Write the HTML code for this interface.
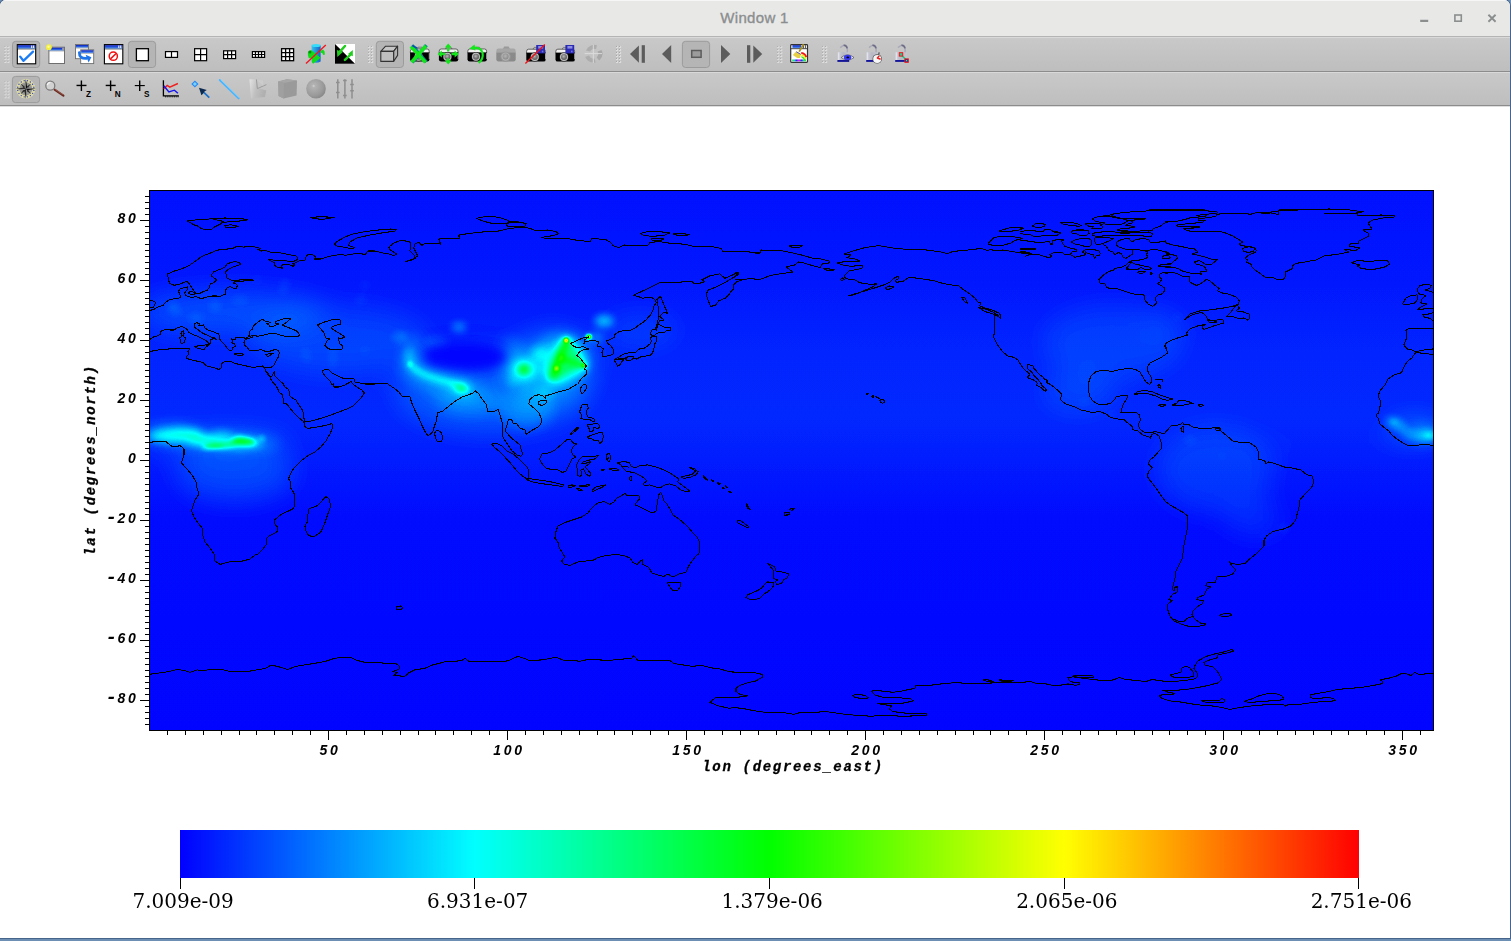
<!DOCTYPE html>
<html lang="en">
<head>
<meta charset="utf-8">
<title>Window 1</title>
<style>
html,body{margin:0;padding:0;background:#6d8fb3;}
body{width:1511px;height:941px;overflow:hidden;position:relative;font-family:"Liberation Sans",sans-serif;}
#win{position:absolute;left:0;top:0;width:1510px;height:938px;overflow:hidden;background:#fff;border-radius:6px 6px 0 0;}
#winshadow{position:absolute;left:-1px;top:-1px;width:1511.6px;height:939.8px;background:#47658a;border-radius:7px 7px 0 0;}
#titlebar{position:absolute;left:0;top:0;width:1510px;height:36px;background:#e8e8e7;border-top:1px solid #f6f6f6;box-sizing:border-box;}
#titlebar .t{position:absolute;left:0;width:1509px;top:8px;text-align:center;font-size:15px;line-height:18px;color:#8b8e8f;letter-spacing:0.3px;-webkit-text-stroke:0.35px #8b8e8f;opacity:0.999;}
#tb1,#tb2{position:absolute;left:0;width:1511px;box-sizing:border-box;background:linear-gradient(#c9c9c9,#bebebe);}
#tb1{top:36px;height:36px;border-top:1px solid #b4b4b4;border-bottom:1px solid #8c8c8c;box-shadow:inset 0 1px 0 #d9d9d9;}
#tb2{top:72px;height:34px;border-bottom:1px solid #8c8c8c;box-shadow:inset 0 1px 0 #d9d9d9, 0 1px 0 #dedede;}
svg.plot{position:absolute;left:0;top:0;opacity:0.999;}
.ax{font-family:"Liberation Mono",monospace;font-weight:bold;font-style:italic;font-size:14px;letter-spacing:1.68px;fill:#000;stroke:#000;stroke-width:0.3px;}
.axn{font-family:"Liberation Sans",sans-serif;font-weight:bold;font-style:italic;font-size:14px;letter-spacing:2.7px;fill:#000;}
.mn{font-family:"Liberation Mono",monospace;font-size:19px;letter-spacing:0.5px;}
.cb{font-family:"DejaVu Serif","Liberation Serif",serif;font-size:20px;fill:#000;}
#wbtn{position:absolute;left:1400px;top:0;}
#tbsvg{position:absolute;left:0;top:0;opacity:0.999;}

.tl{opacity:0.99;font-family:"Liberation Sans",sans-serif;font-weight:bold;font-size:8.2px;fill:#000;}

</style>
</head>
<body>
<div id="winshadow"></div>
<div id="win">
<div id="titlebar"><div class="t">Window 1</div>
<svg id="wbtn" width="110" height="36" viewBox="1400 0 110 36">
<path d="M1420.2 19.9H1428.2" stroke="#8b8e8f" stroke-width="2.1"/>
<rect x="1454.9" y="14.0" width="6.4" height="6.2" fill="none" stroke="#8b8e8f" stroke-width="1.6"/>
<path d="M1488.4 13.8 L1495.6 20.8 M1495.6 13.8 L1488.4 20.8" stroke="#8b8e8f" stroke-width="1.9"/>
</svg></div>

<div id="tb1"></div>
<div id="tb2"></div>
<svg id="tbsvg" width="1511" height="108" viewBox="0 0 1511 108">
<defs>
<linearGradient id="wt" x1="0" y1="0" x2="0" y2="1"><stop offset="0" stop-color="#0a18b4"/><stop offset="0.55" stop-color="#2a5ee0"/><stop offset="1" stop-color="#62a0f4"/></linearGradient>
<linearGradient id="cyl" x1="0" y1="0" x2="1" y2="0"><stop offset="0" stop-color="#2fc4ee"/><stop offset="1" stop-color="#1460c8"/></linearGradient>
<radialGradient id="lens" cx="0.45" cy="0.4" r="0.6"><stop offset="0" stop-color="#b8b8b8"/><stop offset="0.55" stop-color="#7c7c7c"/><stop offset="1" stop-color="#5a5a5a"/></radialGradient>
<radialGradient id="lensd" cx="0.45" cy="0.4" r="0.6"><stop offset="0" stop-color="#b4b4b4"/><stop offset="0.6" stop-color="#9a9a9a"/><stop offset="1" stop-color="#8a8a8a"/></radialGradient>
<radialGradient id="sph" cx="0.38" cy="0.36" r="0.7"><stop offset="0" stop-color="#d4d4d4"/><stop offset="0.12" stop-color="#b2b2b2"/><stop offset="0.7" stop-color="#9a9a9a"/><stop offset="1" stop-color="#868686"/></radialGradient>
<linearGradient id="pl" x1="0" y1="0" x2="1" y2="0.3"><stop offset="0" stop-color="#e4e4e4"/><stop offset="0.5" stop-color="#c0c0c0"/><stop offset="1" stop-color="#b0b0b0"/></linearGradient>
<linearGradient id="lk" x1="0" y1="0" x2="1" y2="0"><stop offset="0" stop-color="#d4d4e2"/><stop offset="0.5" stop-color="#b4b4c6"/><stop offset="1" stop-color="#c8c8d6"/></linearGradient>
<linearGradient id="rb" x1="0" y1="1" x2="1" y2="0"><stop offset="0" stop-color="#20d020"/><stop offset="0.25" stop-color="#20d0e0"/><stop offset="0.45" stop-color="#2030f0"/><stop offset="0.62" stop-color="#e020e0"/><stop offset="0.8" stop-color="#f0e020"/><stop offset="1" stop-color="#f01010"/></linearGradient>
<linearGradient id="rb2" gradientUnits="userSpaceOnUse" x1="792" y1="0" x2="806" y2="0"><stop offset="0" stop-color="#30e020"/><stop offset="0.15" stop-color="#20d8d8"/><stop offset="0.32" stop-color="#2030f0"/><stop offset="0.5" stop-color="#f020f0"/><stop offset="0.68" stop-color="#2030f0"/><stop offset="0.85" stop-color="#20d8a0"/><stop offset="1" stop-color="#40e020"/></linearGradient>
<g id="grip">
<rect x="0" y="0" width="2.1" height="2.1" fill="#dedede"/><rect x="0" y="0" width="1.05" height="1.05" fill="#a4a4a4"/>
<rect x="3" y="0" width="2.1" height="2.1" fill="#dedede"/><rect x="3" y="0" width="1.05" height="1.05" fill="#a4a4a4"/>
<rect x="0" y="3" width="2.1" height="2.1" fill="#dedede"/><rect x="0" y="3" width="1.05" height="1.05" fill="#a4a4a4"/>
<rect x="3" y="3" width="2.1" height="2.1" fill="#dedede"/><rect x="3" y="3" width="1.05" height="1.05" fill="#a4a4a4"/>
<rect x="0" y="6" width="2.1" height="2.1" fill="#dedede"/><rect x="0" y="6" width="1.05" height="1.05" fill="#a4a4a4"/>
<rect x="3" y="6" width="2.1" height="2.1" fill="#dedede"/><rect x="3" y="6" width="1.05" height="1.05" fill="#a4a4a4"/>
<rect x="0" y="9" width="2.1" height="2.1" fill="#dedede"/><rect x="0" y="9" width="1.05" height="1.05" fill="#a4a4a4"/>
<rect x="3" y="9" width="2.1" height="2.1" fill="#dedede"/><rect x="3" y="9" width="1.05" height="1.05" fill="#a4a4a4"/>
<rect x="0" y="12" width="2.1" height="2.1" fill="#dedede"/><rect x="0" y="12" width="1.05" height="1.05" fill="#a4a4a4"/>
<rect x="3" y="12" width="2.1" height="2.1" fill="#dedede"/><rect x="3" y="12" width="1.05" height="1.05" fill="#a4a4a4"/>
<rect x="0" y="15" width="2.1" height="2.1" fill="#dedede"/><rect x="0" y="15" width="1.05" height="1.05" fill="#a4a4a4"/>
<rect x="3" y="15" width="2.1" height="2.1" fill="#dedede"/><rect x="3" y="15" width="1.05" height="1.05" fill="#a4a4a4"/>
</g>
<g id="cam">
<path d="M6.8 2.6 L8.2 0.6 H12.2 L13.6 2.6Z" fill="#d8d8d8" stroke="#555" stroke-width="0.7"/>
<path d="M0.6 4.6 Q0.6 2.4 2.6 2.4 H17.4 Q19.4 2.4 19.4 4.6 V6.4 H0.6Z" fill="#f2f2f2" stroke="#444" stroke-width="0.8"/>
<path d="M0.3 6 H19.7 V12.6 Q19.7 14.8 17.4 14.8 H2.6 Q0.3 14.8 0.3 12.6Z" fill="#000"/>
<circle cx="8.8" cy="10.2" r="4.6" fill="#2a2a2a"/>
<circle cx="8.8" cy="10.2" r="4.0" fill="#c4c4c4"/>
<circle cx="8.8" cy="10.2" r="3.0" fill="url(#lens)"/>
<rect x="19" y="6.5" width="0.9" height="6" fill="#b0b0b0"/>
</g>
<g id="camd">
<path d="M6.8 2.6 L8.2 0.2 H12.6 L14 2.6Z" fill="#9a9a9a"/>
<path d="M0.3 4.6 Q0.3 2.2 2.6 2.2 H17.4 Q19.7 2.2 19.7 4.6 V6.4 H0.3Z" fill="#a6a6a6"/>
<path d="M0.3 6 H19.7 V12.8 Q19.7 15 17.4 15 H2.6 Q0.3 15 0.3 12.8Z" fill="#8a8a8a"/>
<circle cx="9.6" cy="10.2" r="5.2" fill="#969696"/>
<circle cx="9.6" cy="10.2" r="4.2" fill="#b0b0b0"/>
<circle cx="9.6" cy="10.2" r="3.0" fill="url(#lensd)"/>
</g>
<g id="floppy">
<rect x="0" y="0" width="8.8" height="8.4" fill="#2a2ab4"/>
<rect x="2" y="1" width="5" height="2.6" fill="#8c8ce0"/>
<rect x="5.6" y="5.6" width="1.6" height="1.8" fill="#7070d8"/>
</g>
<g id="lock">
<path d="M2.8 3.6 Q5.4 1.4 7.2 1 Q9.6 1.6 9.9 4.6 V8.8" fill="none" stroke="#a9a9ba" stroke-width="1.5"/>
<path d="M6.2 1.2 Q9.4 1.2 9.8 4.4" fill="none" stroke="#6c6c84" stroke-width="1.5"/>
<rect x="0.2" y="8.2" width="11.4" height="8" fill="url(#lk)" opacity="0.75"/>
<rect x="0.6" y="8.4" width="1.4" height="7.6" fill="#e4e4f0" opacity="0.9"/>
<rect x="0" y="16" width="11.8" height="1.9" fill="#14149a"/>
</g>
</defs>
<use href="#grip" x="4.4" y="45.9"/>
<rect x="12.5" y="41.3" width="27.2" height="26.2" rx="3.2" fill="#b5b5b5" stroke="#9b9b9b" stroke-width="1"/>
<rect x="17.3" y="44.6" width="18.4" height="19.2" fill="#fff" stroke="#000" stroke-width="1.1"/>
<rect x="17.85" y="45.15" width="17.299999999999997" height="3.6" fill="url(#wt)"/>
<rect x="31.1" y="45.5" width="1.2" height="2.6" fill="#e8e8f4"/><rect x="33.0" y="45.5" width="1.2" height="2.6" fill="#e8e8f4"/>
<path d="M17.3 49.05H35.7" stroke="#000" stroke-width="0.7" opacity="0.7"/>
<path d="M20.2 56.6 L23.4 60.8 L33 51.6" fill="none" stroke="#1c7cf4" stroke-width="2.3" stroke-linecap="round" stroke-linejoin="round"/>
<rect x="48.9" y="47.2" width="15.6" height="16.3" fill="#fff" stroke="#6e6e6e" stroke-width="1.0"/>
<rect x="49.4" y="47.7" width="14.6" height="3.0" fill="url(#wt)"/>
<path d="M48.9 51.0H64.5" stroke="#6e6e6e" stroke-width="0.7" opacity="0.7"/>
<rect x="62.1" y="47.8" width="2" height="2.6" fill="#9a9aa8"/>
<circle cx="48.9" cy="47.2" r="2.9" fill="#f4f03a"/><circle cx="48.5" cy="46.8" r="1.2" fill="#fbfba0"/>
<rect x="75.5" y="44.5" width="13" height="14.2" fill="#fff" stroke="#6e6e6e" stroke-width="0.9"/>
<rect x="75.95" y="44.95" width="12.1" height="2.8" fill="url(#wt)"/>
<path d="M75.5 48.05H88.5" stroke="#6e6e6e" stroke-width="0.7" opacity="0.7"/>
<rect x="80.7" y="49.8" width="13" height="13.8" fill="#fff" stroke="#6e6e6e" stroke-width="0.9"/>
<rect x="81.15" y="50.25" width="12.1" height="2.8" fill="url(#wt)"/>
<path d="M80.7 53.349999999999994H93.7" stroke="#6e6e6e" stroke-width="0.7" opacity="0.7"/>
<path d="M79.3 52.5 Q79 58.8 86.6 58.4" fill="none" stroke="#1e74e8" stroke-width="2.6" stroke-linecap="round"/>
<path d="M85.6 54.8 L91.4 57.2 L88.6 62.4 Z" fill="#1e74e8"/>
<rect x="104.4" y="44.6" width="18.4" height="19.2" fill="#fff" stroke="#000" stroke-width="1.1"/>
<rect x="104.95" y="45.15" width="17.299999999999997" height="3.6" fill="url(#wt)"/>
<rect x="118.20000000000002" y="45.5" width="1.2" height="2.6" fill="#e8e8f4"/><rect x="120.10000000000001" y="45.5" width="1.2" height="2.6" fill="#e8e8f4"/>
<path d="M104.4 49.05H122.80000000000001" stroke="#000" stroke-width="0.7" opacity="0.7"/>
<circle cx="113.3" cy="56.2" r="4.1" fill="none" stroke="#f01010" stroke-width="1.5"/><path d="M110.5 58.9 L116.1 53.5" stroke="#f01010" stroke-width="1.5"/>
<rect x="128.4" y="41.3" width="27.2" height="26.2" rx="3.2" fill="#b5b5b5" stroke="#9b9b9b" stroke-width="1"/>
<rect x="136.4" y="48.7" width="12" height="12" fill="#fff" stroke="#000" stroke-width="1.3"/>
<rect x="165.5" y="51.6" width="12" height="5.8" fill="#fff" stroke="#000" stroke-width="1.2"/>
<path d="M171.50 51.6V57.4" stroke="#000" stroke-width="1.2" fill="none"/>
<rect x="194.6" y="48.7" width="12" height="12" fill="#fff" stroke="#000" stroke-width="1.2"/>
<path d="M200.60 48.7V60.7M194.6 54.70H206.6" stroke="#000" stroke-width="1.2" fill="none"/>
<rect x="223.6" y="50.8" width="12" height="7.8" fill="#fff" stroke="#000" stroke-width="1.2"/>
<path d="M227.60 50.8V58.599999999999994M231.60 50.8V58.599999999999994M223.6 54.70H235.6" stroke="#000" stroke-width="1.2" fill="none"/>
<rect x="252.4" y="51.6" width="12.2" height="5.8" fill="#fff" stroke="#000" stroke-width="1.2"/>
<path d="M255.45 51.6V57.4M258.50 51.6V57.4M261.55 51.6V57.4M252.4 54.50H264.6" stroke="#000" stroke-width="1.2" fill="none"/>
<rect x="281.6" y="48.7" width="12" height="12" fill="#fff" stroke="#000" stroke-width="1.3"/>
<path d="M285.60 48.7V60.7M289.60 48.7V60.7M281.6 52.70H293.6M281.6 56.70H293.6" stroke="#000" stroke-width="1.3" fill="none"/>
<path d="M311.6 45.4 V61.6 Q316.1 64 320.6 61.6 V45.4Z" fill="url(#cyl)"/><ellipse cx="316.1" cy="45.4" rx="4.5" ry="1.5" fill="#34dcfa"/>
<path d="M307.9 51.9 L311.1 49.9 L315.1 53.1 L319.1 56.7 L320.6 57.5 L319.1 59.1 L313.1 63.8 L311.9 62.2 L311.9 59.1 L308.7 57.9 L307.9 55.1Z" fill="#10dc18"/>
<path d="M320.6 50.7 L323 49.5 L324.6 51.5 L324.8 54.7 L323.4 55.1 L322.2 53.1 L320.6 52.7Z" fill="#10dc18"/>
<circle cx="309.9" cy="52" r="1.6" fill="#0a8c12"/>
<path d="M306 63.4 L325.8 45" stroke="#f01820" stroke-width="1.4"/>
<rect x="335" y="44" width="20" height="19.8" fill="#fff"/><path d="M335 44 L355 63.8 H335Z" fill="#000"/>
<path d="M345 46 L339.9 51.7" stroke="#22cc1e" stroke-width="2.5" stroke-linecap="round"/><path d="M336.9 49.9 L342.9 51.9 L337.3 57.1Z" fill="#22cc1e"/>
<path d="M344.9 59.9 L350.2 54.9" stroke="#22cc1e" stroke-width="2.5" stroke-linecap="round"/><path d="M348 53.9 L352.8 49.9 L352.8 56.3Z" fill="#22cc1e"/>
<use href="#grip" x="368.1" y="45.9"/>
<rect x="376.3" y="41.3" width="27.2" height="26.2" rx="3.2" fill="#b5b5b5" stroke="#9b9b9b" stroke-width="1"/>
<path d="M380.8 51.4 L385.6 46.2 H397.6 L393.6 51.4Z" fill="#c6c6c6" stroke="#333" stroke-width="1.1" stroke-linejoin="round"/>
<path d="M393.6 51.4 L397.6 46.2 V55.4 L393.6 61.4Z" fill="#b2b2b2" stroke="#333" stroke-width="1.1" stroke-linejoin="round"/>
<rect x="380.8" y="51.4" width="12.8" height="10" fill="#bebebe" stroke="#333" stroke-width="1.1" stroke-linejoin="round"/>
<use href="#cam" x="409.8" y="46.6"/>
<path d="M412 45.4 L426.2 62.2" stroke="#0c8a8c" stroke-width="3.6"/><path d="M426.4 45.2 L412.2 62.4" stroke="#0c8a8c" stroke-width="3.6"/>
<path d="M411 46.6 L425.4 62.4" stroke="#14e61c" stroke-width="3.5"/><path d="M425.8 46 L411.6 62.2" stroke="#14e61c" stroke-width="3.5"/>
<path d="M412.6 44.8 L417.6 47.6 L416.6 48.6 L412 46.4Z" fill="#0a50b0"/>
<use href="#cam" x="438.6" y="46.6"/>
<path d="M448.2 46 V51.6 M448.2 58.2 V62.2 M440.4 54 H445.2 M451.4 54 H456.6" stroke="#14e61c" stroke-width="2.3"/>
<path d="M448.2 43.4 L451.6 47.6 H444.8Z M448.2 64.6 L451.6 60.4 H444.8Z M437.6 54 L441.8 50.6 V57.4Z M458.8 54 L454.6 50.6 V57.4Z" fill="#14e61c"/>
<use href="#cam" x="467.2" y="46.6"/>
<path d="M473.6 48 Q480.6 46.8 482.6 53 Q483.6 59.6 478.6 62.8" fill="none" stroke="#14e61c" stroke-width="2.2"/>
<path d="M469.4 48.6 L474.6 44.4 L475.4 50.6Z" fill="#14e61c"/>
<use href="#camd" x="496" y="46.4"/>
<use href="#cam" x="526" y="46.8"/><use href="#floppy" x="536.2" y="45"/><path d="M525.4 63.6 L544.8 44.4" stroke="#f01018" stroke-width="1.4"/>
<use href="#cam" x="555.2" y="46.8"/><use href="#floppy" x="565.4" y="45"/>
<g opacity="0.8"><path d="M586 50.4 A9 9 0 0 1 597 45.2 L596 49.2 A5 5 0 0 0 590 51.6Z" fill="#a8a8a8"/><path d="M601.6 50 A9 9 0 0 1 599.4 60.4 L596.6 57.4 A5 5 0 0 0 597.6 51.4Z" fill="#a2a2a2"/><path d="M595.6 62.4 A9 9 0 0 1 585.2 57 L589 55.6 A5 5 0 0 0 594.6 58.6Z" fill="#a8a8a8"/></g>
<path d="M593.3 44.6 V63 M584.6 53.6 H602" stroke="#dedede" stroke-width="0.9"/>
<use href="#grip" x="616" y="45.9"/>
<path d="M630 54.1 L638.9 45.4 V62.8Z" fill="#5c5c5c"/><rect x="641.7" y="45.2" width="3.2" height="17.6" fill="#5c5c5c"/>
<path d="M662 54.1 L671.2 45 V63Z" fill="#5c5c5c"/>
<rect x="682.4" y="41.3" width="27.2" height="26.2" rx="3.2" fill="#b5b5b5" stroke="#9b9b9b" stroke-width="1"/>
<rect x="691.7" y="50.5" width="9.4" height="6.8" fill="#9c9c9c" stroke="#5c5c5c" stroke-width="1.5"/>
<path d="M730.3 54.1 L721 45 V63Z" fill="#5c5c5c"/>
<rect x="747" y="45.2" width="3.3" height="17.6" fill="#5c5c5c"/><path d="M762.2 54.1 L753.3 45.4 V62.8Z" fill="#5c5c5c"/>
<use href="#grip" x="777.2" y="45.9"/>
<rect x="790.7" y="44.7" width="16.8" height="17.7" rx="0.8" fill="#fff" stroke="#333" stroke-width="1.2"/>
<rect x="792.4" y="45.2" width="8.6" height="3" fill="url(#wt)"/><path d="M790.7 48.7H807.5" stroke="#333" stroke-width="0.9"/><path d="M803.4 45.2V48.4M805.4 45.2V48.4" stroke="#333" stroke-width="0.9"/>
<path d="M792.2 60.4H806" stroke="url(#rb2)" stroke-width="1.9"/>
<path d="M801.4 56.6 Q803.8 57.4 805 60.2" fill="none" stroke="#38e420" stroke-width="1.5"/>
<path d="M801.3 54.8 Q804.8 55.6 805.8 58.8" fill="none" stroke="#f4f020" stroke-width="1.5"/>
<path d="M801.2 52.9 Q805.6 53.6 806.2 57.2" fill="none" stroke="#f01414" stroke-width="1.7"/>
<path d="M803.5 44.2 L799.2 51.6" stroke="#a89022" stroke-width="1.8"/>
<path d="M796.2 51.2 L801 54 L800 58 L797.2 58 L792.8 55Z" fill="#e8d044"/><path d="M796.3 51.8 L800.7 54.3" stroke="#5a5ac8" stroke-width="1.0"/>
<use href="#grip" x="822.1" y="45.9"/>
<use href="#lock" x="837.4" y="44"/>
<path d="M841.2 57.5 Q847.6 52.2 854 57.5 Q847.6 62.6 841.2 57.5Z" fill="#fff" stroke="#333" stroke-width="0.6"/><ellipse cx="847.6" cy="57.4" rx="3.8" ry="2.7" fill="#3838ee"/><ellipse cx="847.8" cy="57.4" rx="1.3" ry="0.9" fill="#000"/>
<use href="#lock" x="866.2" y="44"/>
<path d="M879.2 52.4 L878.6 54.6" stroke="#555" stroke-width="1.3"/><circle cx="877.2" cy="58.9" r="4.7" fill="#555"/><circle cx="877.2" cy="58.9" r="4.0" fill="#f6f6f6"/><path d="M879.2 56 L877.4 58 L880.6 59.2" fill="none" stroke="#f01818" stroke-width="1.5" stroke-linejoin="round"/>
<use href="#lock" x="895.2" y="44"/>
<path d="M901 54.4 L906.6 60.6" stroke="#10d080" stroke-width="1.5"/><rect x="899.3" y="52.7" width="3.4" height="3.4" fill="#30c890" stroke="#f01414" stroke-width="1"/><rect x="904.9" y="58.9" width="3.4" height="3.4" fill="#1830a0" stroke="#f01414" stroke-width="1"/><rect x="906" y="60" width="1.2" height="1.2" fill="#30e0a0"/>
<use href="#grip" x="4.4" y="81.2"/>
<rect x="12.4" y="76.4" width="27.2" height="26.2" rx="3.2" fill="#b5b5b5" stroke="#9b9b9b" stroke-width="1"/>
<circle cx="25.8" cy="88.8" r="9.7" fill="#dcd9a6"/><circle cx="25.8" cy="88.8" r="6.6" fill="#9a9a94"/>
<circle cx="33.84" cy="90.40" r="0.7" fill="#3442b4"/>
<circle cx="32.62" cy="93.36" r="0.7" fill="#3442b4"/>
<circle cx="30.36" cy="95.62" r="0.7" fill="#3442b4"/>
<circle cx="27.40" cy="96.84" r="0.7" fill="#3442b4"/>
<circle cx="24.20" cy="96.84" r="0.7" fill="#3442b4"/>
<circle cx="21.24" cy="95.62" r="0.7" fill="#3442b4"/>
<circle cx="18.98" cy="93.36" r="0.7" fill="#3442b4"/>
<circle cx="17.76" cy="90.40" r="0.7" fill="#3442b4"/>
<circle cx="17.76" cy="87.20" r="0.7" fill="#3442b4"/>
<circle cx="18.98" cy="84.24" r="0.7" fill="#3442b4"/>
<circle cx="21.24" cy="81.98" r="0.7" fill="#3442b4"/>
<circle cx="24.20" cy="80.76" r="0.7" fill="#3442b4"/>
<circle cx="27.40" cy="80.76" r="0.7" fill="#3442b4"/>
<circle cx="30.36" cy="81.98" r="0.7" fill="#3442b4"/>
<circle cx="32.62" cy="84.24" r="0.7" fill="#3442b4"/>
<circle cx="33.84" cy="87.20" r="0.7" fill="#3442b4"/>
<polygon points="31.03,94.03 25.80,90.40 20.57,94.03 24.20,88.80 20.57,83.57 25.80,87.20 31.03,83.57 27.40,88.80" fill="#2e2e2e"/>
<polygon points="35.70,88.80 27.21,90.21 25.80,98.70 24.39,90.21 15.90,88.80 24.39,87.39 25.80,78.90 27.21,87.39" fill="#0c0c0c"/>
<path d="M25.8 79.2 L24.400000000000002 87.39999999999999 L25.8 88.8Z M25.8 98.39999999999999 L27.2 90.2 L25.8 88.8Z M16.200000000000003 88.8 L24.400000000000002 90.2 L25.8 88.8Z M35.4 88.8 L27.2 87.39999999999999 L25.8 88.8Z" fill="#f2f2f2" opacity="0.6"/>
<path d="M54.6 89.6 L63.4 95.6" stroke="#6a2a20" stroke-width="2.2" stroke-linecap="round"/><path d="M54.8 89.2 L62.8 94.6" stroke="#b07060" stroke-width="0.6"/>
<circle cx="50.3" cy="85.7" r="4.5" fill="#d2d2d2" stroke="#7c7c7c" stroke-width="1.3"/><path d="M47.2 85.2 Q47.8 82.6 50.4 82.4" fill="none" stroke="#f4f4f4" stroke-width="1.1"/>
<path d="M76.60000000000001 86.1H86.60000000000001" stroke="#e8e8e8" stroke-width="1.2"/>
<path d="M76.5 85.5H86.5 M81.4 80.5V90.9" stroke="#000" stroke-width="1.4"/>
<text x="86" y="97" class="tl">Z</text>
<path d="M105.8 86.1H115.8" stroke="#e8e8e8" stroke-width="1.2"/>
<path d="M105.69999999999999 85.5H115.69999999999999 M110.6 80.5V90.9" stroke="#000" stroke-width="1.4"/>
<text x="114.8" y="97" class="tl">N</text>
<path d="M134.89999999999998 86.19999999999999H144.89999999999998" stroke="#e8e8e8" stroke-width="1.2"/>
<path d="M134.79999999999998 85.6H144.79999999999998 M139.7 80.6V91.0" stroke="#000" stroke-width="1.4"/>
<text x="144" y="97" class="tl">S</text>
<path d="M163.4 80.2 V95.8 H178.9" fill="none" stroke="#000" stroke-width="1.3"/><path d="M165 96.8H179" stroke="#000" stroke-width="0.9" stroke-dasharray="1 0.8"/>
<path d="M163.8 88.8 L167.2 85.4 L169.8 87.2 L177.9 83.5" fill="none" stroke="#f02020" stroke-width="1.4"/>
<path d="M163.8 85.8 L168.9 91.9 L174.4 90.2 L177.9 93.2" fill="none" stroke="#1414f0" stroke-width="1.4"/>
<rect x="192.9" y="82" width="4" height="4" transform="rotate(45 194.9 84)" fill="#78d0ff" stroke="#2a86f0" stroke-width="1.1"/>
<path d="M203 91.6 L209.3 97.6" stroke="#1a70c8" stroke-width="1.7"/><path d="M199 87.8 L206.8 90 L204.4 91.4 L203 93.8 L201.4 95.2Z" fill="#0c2a50"/>
<path d="M219.8 80 L238.6 98.4" stroke="#48b4ff" stroke-width="2" stroke-linecap="round"/><path d="M220.6 79.6 L239 97.6" stroke="#8adcff" stroke-width="0.7"/>
<path d="M249.4 79.2 L256.8 79.6 L257.6 88 L266.4 90.6 L265 97 L251 98.4Z" fill="url(#pl)"/><path d="M256.4 79.4 L257.4 88.6 L266.4 84.6" fill="none" stroke="#9c9c9c" stroke-width="1"/><path d="M257 80 L263 80.4 L263.4 86" fill="#cfcfcf" opacity="0.7"/>
<path d="M278.2 81.4 L287 79.2 L297 80.6 L296.6 95.4 L283.6 98.6 L278.6 96Z" fill="#9a9a9a"/><path d="M278.2 81.4 L287 79.2 L297 80.6 L284 83Z" fill="#a6a6a6"/><path d="M284 83 L283.6 98.6 L278.6 96 L278.2 81.4Z" fill="#a0a0a0"/>
<circle cx="316" cy="88.7" r="9.8" fill="url(#sph)"/>
<path d="M337.8 79.2 V98.6 M344.9 79.2 V98.6 M352 79.2 V98.6" stroke="#8e8e8e" stroke-width="1.5"/>
<path d="M336 82.6h3.6M336 92.4h3.6M343.1 80.4h3.6M343.1 95.4h3.6M350.2 84.6h3.6M350.2 90.8h3.6" stroke="#8e8e8e" stroke-width="1.5"/>
</svg>

<svg class="plot" width="1511" height="941" viewBox="0 0 1511 941">
<g id="field">
<defs>
<filter id="cmap" x="0" y="0" width="100%" height="100%" filterUnits="objectBoundingBox" color-interpolation-filters="sRGB">
<feComponentTransfer>
<feFuncR type="table" tableValues="0 0 0 1 1"/>
<feFuncG type="table" tableValues="0 1 1 1 0"/>
<feFuncB type="table" tableValues="1 1 0 0 0"/>
</feComponentTransfer>
</filter>
<filter id="b14" x="-50%" y="-50%" width="200%" height="200%" color-interpolation-filters="sRGB"><feGaussianBlur stdDeviation="14"/></filter>
<filter id="b8" x="-50%" y="-50%" width="200%" height="200%" color-interpolation-filters="sRGB"><feGaussianBlur stdDeviation="8"/></filter>
<filter id="b5" x="-50%" y="-50%" width="200%" height="200%" color-interpolation-filters="sRGB"><feGaussianBlur stdDeviation="4.5"/></filter>
<filter id="b3" x="-50%" y="-50%" width="200%" height="200%" color-interpolation-filters="sRGB"><feGaussianBlur stdDeviation="2.6"/></filter>
<filter id="b2" x="-50%" y="-50%" width="200%" height="200%" color-interpolation-filters="sRGB"><feGaussianBlur stdDeviation="1.6"/></filter>
<filter id="b1" x="-50%" y="-50%" width="200%" height="200%" color-interpolation-filters="sRGB"><feGaussianBlur stdDeviation="0.9"/></filter>
<linearGradient id="bg" x1="0" y1="0" x2="0" y2="1">
<stop offset="0" stop-color="#040404"/><stop offset="0.18" stop-color="#060606"/><stop offset="0.3" stop-color="#090909"/><stop offset="0.42" stop-color="#0a0a0a"/><stop offset="0.5" stop-color="#070707"/><stop offset="0.6" stop-color="#030303"/><stop offset="1" stop-color="#010101"/>
</linearGradient>
<clipPath id="fclip"><rect x="149.6" y="190.5" width="1283.9" height="540"/></clipPath>
</defs>
<g clip-path="url(#fclip)"><g filter="url(#cmap)">
<rect x="147.6" y="188.5" width="1287.9" height="544" fill="url(#bg)"/>
<g filter="url(#b14)">
<ellipse cx="230" cy="312" rx="95" ry="22" fill="#fff" fill-opacity="0.05"/>
<ellipse cx="340" cy="340" rx="90" ry="35" fill="#fff" fill-opacity="0.035"/>
<ellipse cx="490" cy="390" rx="95" ry="42" fill="#fff" fill-opacity="0.055"/>
<ellipse cx="553" cy="366" rx="42" ry="36" fill="#fff" fill-opacity="0.07"/>
<ellipse cx="235" cy="472" rx="60" ry="30" fill="#fff" fill-opacity="0.05"/>
<ellipse cx="215" cy="441" rx="80" ry="9" fill="#fff" fill-opacity="0.06"/>
<ellipse cx="1112" cy="342" rx="72" ry="38" fill="#fff" fill-opacity="0.032"/>
<ellipse cx="1165" cy="325" rx="22" ry="14" fill="#fff" fill-opacity="0.02"/>
<ellipse cx="1078" cy="392" rx="38" ry="22" fill="#fff" fill-opacity="0.03"/>
<ellipse cx="1215" cy="470" rx="60" ry="45" fill="#fff" fill-opacity="0.035"/>
<ellipse cx="1255" cy="520" rx="30" ry="18" fill="#fff" fill-opacity="0.03"/>
<ellipse cx="1320" cy="440" rx="90" ry="8" fill="#fff" fill-opacity="0.012"/>
<ellipse cx="1415" cy="430" rx="28" ry="12" fill="#fff" fill-opacity="0.07"/>
<ellipse cx="640" cy="330" rx="40" ry="18" fill="#fff" fill-opacity="0.03"/>
</g>
<g filter="url(#b8)">
<ellipse cx="562" cy="358" rx="26" ry="24" fill="#fff" fill-opacity="0.1"/>
<ellipse cx="525" cy="370" rx="16" ry="14" fill="#fff" fill-opacity="0.08"/>
<ellipse cx="440" cy="380" rx="42" ry="12" fill="#fff" fill-opacity="0.08" transform="rotate(20 440 380)"/>
<ellipse cx="512" cy="360" rx="8" ry="22" fill="#fff" fill-opacity="0.08"/>
<ellipse cx="412" cy="352" rx="8" ry="16" fill="#fff" fill-opacity="0.08"/>
<ellipse cx="225" cy="441" rx="55" ry="6" fill="#fff" fill-opacity="0.1" transform="rotate(3 225 441)"/>
<ellipse cx="170" cy="434" rx="28" ry="8" fill="#fff" fill-opacity="0.1"/>
<ellipse cx="470" cy="400" rx="35" ry="14" fill="#fff" fill-opacity="0.05"/>
<ellipse cx="528" cy="408" rx="25" ry="20" fill="#fff" fill-opacity="0.06"/>
<ellipse cx="1425" cy="434" rx="16" ry="7" fill="#fff" fill-opacity="0.1"/>
<ellipse cx="465" cy="357" rx="46" ry="15" fill="#000" fill-opacity="0.7"/>
</g>
<g filter="url(#b5)">
<polygon points="546,380 547,364 556,346 564,336 572,338 581,350 588,363 585,372 570,377 558,384" fill="#fff" fill-opacity="0.15"/>
<ellipse cx="465" cy="357" rx="40" ry="12" fill="#000" fill-opacity="0.75"/>
<ellipse cx="524" cy="369.5" rx="10" ry="9" fill="#fff" fill-opacity="0.14"/>
<path d="M409 352 L409.5 364 Q416 373 432 377.5 T462 386.5" fill="none" stroke="#fff" stroke-opacity="0.15" stroke-width="5" stroke-linecap="round" stroke-linejoin="round"/>
<ellipse cx="462" cy="388" rx="9" ry="5" fill="#fff" fill-opacity="0.12"/>
<ellipse cx="228" cy="442" rx="36" ry="6" fill="#fff" fill-opacity="0.12" transform="rotate(2 228 442)"/>
<ellipse cx="175" cy="435" rx="27" ry="6" fill="#fff" fill-opacity="0.18" transform="rotate(-3 175 435)"/>
<ellipse cx="202" cy="440" rx="16" ry="5" fill="#fff" fill-opacity="0.12"/>
<ellipse cx="222" cy="434" rx="9" ry="4" fill="#fff" fill-opacity="0.08"/>
<ellipse cx="604" cy="321" rx="9" ry="5" fill="#fff" fill-opacity="0.2"/>
<ellipse cx="459" cy="327" rx="7" ry="3.5" fill="#fff" fill-opacity="0.16"/>
<ellipse cx="399" cy="337" rx="8" ry="3" fill="#fff" fill-opacity="0.06"/>
<ellipse cx="333" cy="353" rx="4" ry="3" fill="#fff" fill-opacity="0.05"/>
<ellipse cx="333" cy="363" rx="4" ry="3" fill="#fff" fill-opacity="0.05"/>
<ellipse cx="307" cy="359" rx="4" ry="3" fill="#fff" fill-opacity="0.04"/>
<ellipse cx="513" cy="381" rx="5" ry="4" fill="#fff" fill-opacity="0.07"/>
<ellipse cx="539" cy="355" rx="6" ry="4" fill="#fff" fill-opacity="0.06"/>
<ellipse cx="437" cy="341" rx="10" ry="4" fill="#fff" fill-opacity="0.04"/>
<ellipse cx="1428" cy="435" rx="8" ry="4" fill="#fff" fill-opacity="0.1"/>
<ellipse cx="1395" cy="423" rx="10" ry="4" fill="#fff" fill-opacity="0.08" transform="rotate(15 1395 423)"/>
<path d="M1390 421 Q1398 423.5 1404 430.5 T1434 436" fill="none" stroke="#fff" stroke-opacity="0.12" stroke-width="5" stroke-linecap="round" stroke-linejoin="round"/>
<ellipse cx="596" cy="338" rx="7" ry="5" fill="#fff" fill-opacity="0.1"/>
<ellipse cx="173" cy="306" rx="5" ry="3.5" fill="#fff" fill-opacity="0.06"/>
<ellipse cx="176" cy="312" rx="4" ry="3" fill="#fff" fill-opacity="0.05"/>
<ellipse cx="215" cy="306" rx="6" ry="3.5" fill="#fff" fill-opacity="0.05"/>
<ellipse cx="257" cy="280" rx="3.5" ry="2.5" fill="#fff" fill-opacity="0.05"/>
<ellipse cx="285" cy="283" rx="4" ry="2.5" fill="#fff" fill-opacity="0.06"/>
<ellipse cx="283" cy="291" rx="4" ry="2.5" fill="#fff" fill-opacity="0.05"/>
<ellipse cx="365" cy="285" rx="4" ry="2.5" fill="#fff" fill-opacity="0.05"/>
<ellipse cx="361" cy="300" rx="5" ry="2.5" fill="#fff" fill-opacity="0.05"/>
<ellipse cx="305" cy="352" rx="4" ry="3" fill="#fff" fill-opacity="0.04"/>
<ellipse cx="365" cy="351" rx="4" ry="3" fill="#fff" fill-opacity="0.04"/>
<ellipse cx="401" cy="336" rx="6" ry="3" fill="#fff" fill-opacity="0.05"/>
<ellipse cx="429" cy="342" rx="6" ry="3" fill="#fff" fill-opacity="0.04"/>
<ellipse cx="196" cy="318" rx="8" ry="4" fill="#fff" fill-opacity="0.04"/>
<ellipse cx="240" cy="300" rx="9" ry="4" fill="#fff" fill-opacity="0.03"/>
<ellipse cx="1178" cy="317" rx="4" ry="3" fill="#fff" fill-opacity="0.04"/>
<ellipse cx="1084" cy="402" rx="4" ry="3" fill="#fff" fill-opacity="0.04"/>
<ellipse cx="1112" cy="415" rx="4" ry="3" fill="#fff" fill-opacity="0.04"/>
<ellipse cx="1190" cy="440" rx="6" ry="4" fill="#fff" fill-opacity="0.03"/>
<ellipse cx="1222" cy="456" rx="4" ry="3" fill="#fff" fill-opacity="0.03"/>
<ellipse cx="1284" cy="528" rx="5" ry="3" fill="#fff" fill-opacity="0.05"/>
<ellipse cx="1265" cy="536" rx="5" ry="3" fill="#fff" fill-opacity="0.03"/>
<ellipse cx="540" cy="352" rx="9" ry="6" fill="#fff" fill-opacity="0.07"/>
<ellipse cx="545" cy="392" rx="10" ry="6" fill="#fff" fill-opacity="0.06"/>
</g>
<g filter="url(#b3)">
<polygon points="549.5,377 550,365 558.5,348 565.5,339.5 570.5,341 578,352 585,363.5 582,369 568.5,373 558.5,380" fill="#fff" fill-opacity="0.07"/>
<path d="M566 341.5 L561.5 353 L555.5 369 L553 376" fill="none" stroke="#fff" stroke-opacity="0.16" stroke-width="9" stroke-linecap="round" stroke-linejoin="round"/>
<path d="M561 358 L572 362 L583.5 365.5" fill="none" stroke="#fff" stroke-opacity="0.14" stroke-width="6.5" stroke-linecap="round" stroke-linejoin="round"/>
<ellipse cx="524" cy="369.5" rx="5.5" ry="5" fill="#fff" fill-opacity="0.2"/>
<polygon points="202,446.5 214,443 230,442.4 232.5,439.8 238,436.6 245.6,437.8 255,440.4 257,443.4 251,445.6 238,445.6 224.5,447.6 211,448.6 203.5,448.2" fill="#fff" fill-opacity="0.26"/>
<path d="M410 365 Q420 374 436 378.5 T463 386.5" fill="none" stroke="#fff" stroke-opacity="0.09" stroke-width="3.2" stroke-linecap="round" stroke-linejoin="round"/>
<ellipse cx="462" cy="389" rx="6" ry="3" fill="#fff" fill-opacity="0.14"/>
<ellipse cx="262" cy="438.3" rx="2.6" ry="2" fill="#fff" fill-opacity="0.2"/>
<ellipse cx="566" cy="342" rx="3" ry="3" fill="#fff" fill-opacity="0.12"/>
<ellipse cx="588.6" cy="337" rx="3" ry="2.6" fill="#fff" fill-opacity="0.2"/>
<ellipse cx="1430" cy="435.5" rx="5" ry="2.5" fill="#fff" fill-opacity="0.08"/>
<ellipse cx="1394" cy="421.5" rx="4" ry="2" fill="#fff" fill-opacity="0.06"/>
</g>
<g filter="url(#b2)">
<polygon points="552,374 553,365 560,350 566,342 570,343.5 576,353 582,363.5 580,367 568,370.5 559,376" fill="#fff" fill-opacity="0.04"/>
<ellipse cx="410" cy="364" rx="2.5" ry="3" fill="#fff" fill-opacity="0.1"/>
<ellipse cx="243" cy="441" rx="10" ry="3" fill="#fff" fill-opacity="0.1"/>
<ellipse cx="215" cy="446" rx="9" ry="2" fill="#fff" fill-opacity="0.08"/>
<ellipse cx="556.6" cy="368.4" rx="3" ry="3" fill="#fff" fill-opacity="0.18"/>
<ellipse cx="583.4" cy="365.6" rx="2.2" ry="2.4" fill="#fff" fill-opacity="0.22"/>
</g>
<g filter="url(#b1)">
<ellipse cx="566.2" cy="340.2" rx="2.0" ry="2.2" fill="#fff" fill-opacity="0.85"/>
<ellipse cx="588.8" cy="336.8" rx="2.3" ry="2.0" fill="#fff" fill-opacity="0.85"/>
<ellipse cx="556.6" cy="368.4" rx="1.6" ry="1.6" fill="#fff" fill-opacity="0.3"/>
<ellipse cx="583.6" cy="365.6" rx="1.4" ry="1.6" fill="#fff" fill-opacity="0.4"/>
</g>
</g></g>

</g>
<g id="coast">
<defs><clipPath id="mapclip"><rect x="149.6" y="190.5" width="1283.9" height="540"/></clipPath></defs>
<path fill="none" stroke="#000" stroke-width="1.05" stroke-linejoin="round" shape-rendering="crispEdges" clip-path="url(#mapclip)" d="M149.8 310.5 L154.5 309.0 L158.5 306.8 L163.0 305.5 L165.5 302.5 L169.0 300.0 L174.0 298.8 L179.0 298.2 L181.0 297.0 L179.5 294.0 L178.5 291.0 L180.0 289.0 L185.0 287.5 L187.5 286.8 L188.0 289.0 L186.0 291.0 L184.5 293.0 L185.5 295.2 L189.0 296.8 L192.0 297.5 L196.0 296.5 L199.5 298.0 L202.5 298.3 L207.0 297.0 L212.0 296.0 L216.4 296.0 L219.9 296.5 L222.9 295.0 L225.9 294.0 L225.4 290.0 L227.4 287.8 L230.4 286.5 L232.9 288.0 L236.4 288.5 L237.4 285.5 L235.9 284.0 L233.4 283.2 L234.4 282.0 L237.9 281.2 L243.4 281.0 L248.9 280.8 L253.4 280.5 L252.4 279.8 L246.9 279.3 L242.4 279.5 L236.9 280.5 L231.9 280.5 L228.9 279.0 L226.4 277.5 L226.4 275.0 L225.4 272.5 L226.9 270.5 L229.9 268.5 L233.9 266.5 L237.9 265.5 L240.9 264.0 L238.9 262.5 L235.4 261.5 L230.9 262.5 L226.9 264.0 L224.9 267.0 L220.9 269.0 L216.9 270.5 L213.5 272.0 L211.5 275.0 L212.0 276.5 L215.0 278.5 L216.4 280.0 L214.0 282.5 L210.5 284.0 L209.0 288.0 L207.0 290.5 L203.5 291.5 L199.5 293.5 L195.5 293.0 L194.0 291.0 L191.5 287.5 L189.5 284.0 L187.0 281.2 L183.5 282.5 L179.0 284.5 L174.0 285.2 L169.5 283.5 L168.5 279.5 L167.5 274.0 L174.0 271.2 L181.0 269.0 L188.0 266.2 L195.0 261.5 L201.0 257.0 L205.0 255.0 L211.0 252.8 L216.9 250.2 L223.9 249.2 L231.9 248.8 L235.4 247.0 L238.9 246.2 L243.9 247.2 L245.9 246.5 L252.9 246.5 L257.9 247.8 L260.9 248.5 L257.9 249.2 L261.4 251.0 L264.9 250.5 L270.9 252.2 L279.9 252.8 L288.9 254.5 L296.0 256.0
M189.0 292.0 L192.0 291.8 L195.0 292.7 L194.0 294.5 L191.0 294.8 L189.0 293.5 L189.0 292.0
M149.8 300.0 L154.0 301.2 L155.5 302.5 L154.5 305.0 L153.5 307.0 L149.8 308.0
M296.0 260.5 L292.9 261.5 L286.9 261.0 L279.9 260.5 L272.9 260.0 L268.9 259.5 L270.9 261.0 L274.4 262.5 L274.9 265.5 L276.9 267.0 L280.9 267.5 L282.4 268.5 L281.4 266.0 L282.9 264.5 L288.9 264.5 L292.9 266.2 L294.9 265.5 L292.9 263.5 L296.0 262.8
M149.8 339.5 L153.5 337.0 L158.0 335.8 L160.5 334.0 L161.0 331.2 L165.0 329.5 L170.0 330.0 L174.0 330.0 L177.0 328.0 L181.5 326.5 L185.0 327.8 L187.0 329.5 L189.0 332.5 L193.0 334.5 L198.0 336.5 L203.0 339.0 L207.5 341.5 L208.5 343.5 L207.0 346.5 L209.0 345.0 L211.0 342.0 L210.0 340.0 L214.0 338.5 L216.4 339.5 L215.0 338.0 L211.0 337.0 L207.0 335.0 L203.0 333.5 L199.0 330.5 L195.0 327.5 L194.5 324.0 L196.5 322.5 L199.5 324.0 L199.0 325.5 L203.5 325.0 L205.0 328.0 L209.0 330.5 L214.0 332.0 L218.4 334.0 L219.7 336.5 L219.4 339.0 L222.4 342.5 L225.4 345.5 L227.9 349.0 L229.9 350.5 L231.9 350.0 L232.9 347.5 L235.9 346.0 L234.4 344.0 L231.9 343.0 L232.4 341.0 L231.4 338.5 L233.9 340.0 L235.9 339.5 L235.4 337.5 L239.9 337.2 L243.9 337.5 L244.9 339.0 L248.9 336.5 L252.9 335.5 L252.4 337.0 L248.4 338.5 L245.4 339.5 L243.9 342.0 L244.9 345.5 L246.9 347.0 L248.9 350.0 L252.9 350.5 L255.9 351.0 L260.4 349.5 L264.4 351.0 L268.9 351.5 L272.4 350.5 L274.9 349.3 L278.4 350.5 L279.4 352.5 L278.4 357.0 L275.9 361.0 L273.9 365.5 L270.9 367.5 L267.4 367.2 L264.4 367.8 L262.4 366.0 L257.9 366.5 L253.4 367.8 L249.9 366.5 L244.9 365.8 L239.9 364.5 L234.9 363.5 L230.9 361.5 L224.9 361.5 L221.9 363.5 L221.4 367.5 L218.9 369.5 L215.0 368.0 L211.0 367.0 L207.5 366.5 L205.0 364.5 L203.0 362.5 L199.0 361.5 L194.0 360.5 L189.5 359.5 L186.5 358.0 L187.0 356.0 L189.0 354.0 L188.0 351.5 L189.8 349.0 L187.0 348.5 L182.0 348.5 L177.0 349.0 L172.0 348.5 L165.0 349.5 L158.0 350.0 L149.8 351.5
M248.9 336.5 L249.4 331.5 L252.4 329.0 L253.4 326.0 L257.9 322.0 L262.4 319.3 L264.9 321.0 L268.9 322.0 L270.4 322.8 L266.4 323.5 L268.9 325.0 L269.9 326.5 L273.9 326.2 L275.9 325.0 L278.9 324.0 L275.4 323.0 L275.9 321.5 L279.9 320.0 L284.9 318.5 L290.4 319.0 L286.9 322.0 L282.4 325.0 L286.9 327.0 L291.9 329.0 L296.0 330.5
M252.9 335.5 L257.9 336.2 L263.9 335.0 L269.9 333.5 L274.9 333.3 L279.9 335.0 L284.9 336.2 L289.9 337.0 L296.0 336.2
M264.4 367.8 L265.4 370.3 L267.4 374.0 L269.9 377.0 L271.4 380.5 L274.9 384.4 L277.9 388.9 L278.4 391.4 L282.4 394.9 L283.4 399.9 L283.9 404.0
M265.4 370.3 L268.9 374.8 L271.1 376.8 L272.7 375.5 L273.1 373.5 L274.4 371.5 L274.1 375.0 L276.9 378.0 L279.9 381.0 L283.4 383.9 L284.4 386.4 L287.9 388.9 L289.9 392.9 L289.9 395.9 L292.9 398.4 L296.0 399.9
M182.0 331.5 L183.5 331.0 L184.0 333.5 L182.8 335.0 L183.5 336.5 L185.5 338.0 L185.0 340.0 L184.5 342.5 L182.0 343.5 L180.5 342.5 L180.5 340.0 L179.5 338.0 L181.5 336.8 L182.2 335.0 L181.0 333.5 L182.0 331.5
M194.5 346.5 L199.0 345.8 L205.0 345.0 L207.5 344.5 L206.5 346.5 L204.5 348.5 L204.0 349.5 L201.0 349.0 L197.0 348.0 L194.5 346.5
M233.9 353.7 L237.9 353.2 L241.9 353.5 L243.9 354.5 L240.9 355.5 L237.9 355.2 L234.9 354.7 L233.9 353.7
M265.4 354.7 L268.9 353.7 L273.9 353.0 L271.4 354.2 L269.9 355.5 L267.9 356.5 L266.4 355.5 L265.4 354.7
M187.4 221.0 L195.0 220.0 L205.0 219.6 L213.0 218.4 L224.9 218.0 L238.9 218.4 L247.9 219.6 L244.9 220.8 L234.9 221.2 L226.9 222.0 L221.9 222.8 L220.0 224.4 L215.0 226.6 L212.0 229.0 L205.0 229.6 L201.0 228.4 L197.4 226.0 L193.0 224.4 L187.4 221.0
M213.0 219.0 L219.0 220.4 L223.9 221.6
M224.5 225.6 L230.9 224.8 L238.5 226.4 L232.9 227.6 L225.9 227.4 L224.5 225.6
M310.5 217.6 L318.9 216.8 L334.5 217.2 L329.9 218.2 L322.9 219.4 L315.9 218.8 L310.5 217.6
M334.1 244.0 L337.9 241.0 L344.9 237.0 L352.9 234.0 L364.9 231.6 L378.8 230.0 L390.8 229.0 L396.4 229.6 L394.8 231.2 L382.8 232.8 L368.9 235.2 L356.9 238.0 L349.9 242.0 L348.5 245.4 L354.9 247.6 L351.9 248.8 L343.9 247.2 L336.9 246.0 L334.1 244.0
M295.9 256.0 L297.9 257.6 L297.3 259.6 L295.9 260.4
M295.9 330.5 L298.5 332.9 L299.5 334.9 L298.1 336.3 L295.9 336.1
M295.9 262.7 L298.9 261.0 L304.9 260.4 L305.9 257.0 L307.9 254.6 L312.9 255.0 L315.9 257.0 L313.9 259.0 L320.9 259.0 L328.9 256.4 L336.9 255.0 L341.9 254.0 L344.9 255.4 L352.9 254.0 L359.9 253.0 L364.9 255.0 L367.9 251.0 L374.8 251.0 L382.8 253.0 L388.8 254.0 L393.8 255.6 L396.8 254.0 L389.8 249.6 L388.8 247.0 L393.8 243.0 L400.8 240.4 L409.8 241.6 L410.8 246.0 L409.8 251.0 L413.8 255.0 L415.8 258.0 L410.8 260.4 L405.8 261.6 L412.8 259.0 L417.8 256.0 L415.8 252.0 L413.8 248.0 L414.8 244.0 L418.8 242.0 L421.8 245.6 L423.8 244.0 L432.8 243.6 L439.8 243.6 L440.8 244.6 L438.8 239.0 L447.0 238.4
M317.3 324.9 L324.9 321.9 L332.9 319.5 L339.9 319.5 L340.9 323.9 L333.9 325.9 L330.9 327.9 L336.9 331.9 L341.9 334.9 L344.9 336.9 L341.9 338.3 L337.9 337.9 L339.9 343.9 L342.9 345.9 L342.5 349.5 L334.9 349.9 L328.9 348.9 L324.9 345.9 L326.9 340.9 L329.9 338.9 L325.9 337.9 L323.9 332.9 L320.9 328.9 L317.3 324.9
M447.0 238.4 L449.0 238.4 L460.0 238.8 L458.4 235.2 L468.0 233.6 L482.0 232.0 L496.0 231.6 L507.0 229.0 L517.9 227.4 L524.9 227.4 L529.9 228.4 L534.9 230.4 L547.9 230.0 L555.9 231.6 L558.3 233.6 L553.9 235.6 L545.9 236.6 L541.9 237.4 L547.9 239.0 L557.9 238.4 L569.9 239.0 L577.9 240.4 L589.9 241.6 L591.9 238.4 L605.9 239.6 L610.9 242.6 L612.9 245.6 L618.9 247.6 L623.9 245.0 L635.9 245.6 L647.9 245.4 L649.9 242.4 L659.9 241.6 L667.8 243.0 L677.8 243.4 L687.8 245.0 L695.8 247.0 L711.8 246.6 L720.8 248.4 L722.8 251.4 L733.8 251.6 L742.0 251.6
M476.4 218.4 L483.0 217.0 L493.0 216.4 L501.0 218.0 L508.0 220.4 L509.0 223.0 L500.0 223.6 L490.0 223.0 L483.0 221.0 L476.4 218.4
M508.0 222.0 L518.9 222.0 L526.3 223.6 L524.9 226.0 L515.9 227.0 L508.0 226.4 L506.4 225.0 L508.0 222.0
M640.3 233.4 L647.9 231.6 L659.9 231.6 L669.4 233.0 L663.9 235.4 L651.9 236.4 L643.9 235.4 L640.3 233.4
M672.8 234.0 L681.8 233.6 L689.4 234.4 L685.8 235.6 L677.8 235.4 L672.8 234.0
M650.9 239.0 L656.9 238.0 L663.5 239.0 L659.9 241.0 L652.9 240.6 L650.9 239.0
M644.9 289.9 L659.9 282.5 L675.8 282.3 L691.8 281.5 L693.8 283.5 L699.8 283.3 L704.8 281.5 L701.8 279.9 L709.8 275.9 L719.8 273.9 L724.8 278.3 L731.8 275.3 L737.8 272.3 L738.8 274.3 L732.2 278.3 L723.8 283.3 L713.8 287.9 L707.8 290.3 L706.2 294.9 L708.8 301.9 L710.8 306.5 L715.8 304.9 L718.8 300.9 L725.8 297.9 L728.8 294.9 L730.8 291.5 L733.8 288.9 L733.8 284.9 L736.8 281.9 L742.0 279.9
M644.9 290.0 L633.4 295.2 L638.9 296.8 L642.9 298.2 L646.9 297.5 L651.4 297.2 L654.9 299.5 L656.4 302.5 L653.9 306.0 L652.9 310.5 L650.4 315.0 L646.9 319.0 L642.9 322.5 L638.9 325.0 L634.4 328.5 L630.0 330.5 L624.0 330.5 L618.5 332.0 L614.8 334.5 L614.0 337.5 L610.0 339.5 L606.5 341.0 L608.0 343.5 L611.0 346.0 L613.5 349.5 L613.0 354.0 L610.0 355.5 L605.5 356.2 L602.5 356.0 L602.0 352.5 L603.5 349.0 L601.0 347.0 L597.5 346.0 L598.5 342.0 L595.0 340.5 L590.0 340.8 L585.0 342.0 L584.0 343.5 L584.5 340.0 L588.5 337.0 L584.0 337.5 L576.0 341.0 L570.5 343.5 L574.0 346.5 L578.0 348.0 L583.0 346.5 L588.5 349.0 L583.0 350.0 L579.5 352.0 L577.0 355.5 L580.5 358.5 L583.5 362.4 L586.5 365.9 L584.5 368.9 L586.8 370.9 L586.5 374.4 L582.5 377.4 L580.0 380.4 L578.0 384.0
M660.4 296.2 L661.9 299.5 L663.9 305.0 L666.4 310.5 L667.7 313.2 L663.9 312.5 L661.4 314.5 L659.9 316.8 L663.4 319.5 L662.9 321.0 L659.9 320.5 L658.4 323.0 L657.4 327.0 L656.4 330.0 L655.9 328.0 L657.4 323.0 L658.4 318.0 L658.4 313.0 L658.4 308.0 L657.4 303.0 L656.9 299.5 L660.4 296.2
M658.4 324.0 L662.9 326.5 L666.9 328.0 L670.4 327.5 L670.4 330.0 L665.9 331.0 L663.9 333.0 L659.9 332.5 L656.4 333.5 L654.4 336.0 L651.4 335.5 L650.4 333.0 L651.9 330.0 L655.9 329.5 L658.4 324.0
M654.4 336.0 L656.4 337.0 L656.9 340.5 L654.4 344.5 L653.9 349.0 L652.4 353.0 L650.4 355.2 L645.9 356.0 L640.9 356.8 L636.4 359.0 L633.9 358.0 L633.4 356.5 L629.0 356.5 L625.0 358.0 L622.0 359.0 L618.0 359.0 L614.5 359.5 L619.0 357.0 L624.0 354.0 L630.0 352.5 L635.4 353.0 L636.9 351.0 L639.9 348.5 L642.9 349.0 L646.9 346.5 L649.9 344.0 L651.4 341.0 L650.4 338.0 L652.4 336.0 L654.4 336.0
M628.0 356.8 L633.4 356.5 L633.9 358.0 L631.0 360.0 L627.0 360.5 L625.0 359.0 L628.0 356.8
M614.5 359.5 L618.0 359.0 L622.0 359.0 L624.0 360.0 L621.5 361.9 L620.5 364.4 L617.5 366.4 L616.5 363.9 L615.5 361.9 L614.0 361.0 L614.5 359.5
M735.0 251.6 L747.0 251.6 L755.0 253.0 L760.0 253.0 L761.0 250.0 L771.0 250.4 L783.0 251.0 L793.0 253.0 L803.0 255.4 L811.9 258.0 L820.9 259.0 L828.9 261.0 L829.9 262.9 L822.9 263.5 L819.9 267.5 L813.9 265.9 L808.0 264.3 L804.0 262.9 L798.6 261.9 L795.0 264.9 L786.0 266.9 L790.0 269.9 L793.0 272.3 L783.0 273.3 L771.0 275.3 L759.0 279.9 L751.0 278.3 L742.0 279.9 L735.0 279.9
M789.4 246.0 L795.0 245.0 L802.6 245.6 L799.0 247.4 L793.0 247.6 L789.4 246.0
M822.9 268.5 L828.9 268.9 L834.5 269.9 L830.9 270.9 L825.9 269.9 L822.9 268.5
M735.0 272.3 L738.6 272.3 L736.6 275.3 L735.0 275.3
M843.9 254.0 L852.9 251.0 L864.9 247.6 L878.9 245.6 L892.9 248.0 L906.9 249.4 L926.9 250.0 L940.9 252.0 L947.9 253.6 L952.9 251.4 L962.8 250.6 L972.8 249.4 L981.8 248.4 L986.8 250.4 L991.8 249.6 L994.8 251.0 L1002.8 250.0 L1014.8 252.0 L1024.8 253.6 L1037.0 255.0
M843.9 254.0 L850.9 255.0 L846.9 257.6 L854.9 259.0 L859.9 261.0 L852.9 261.9 L844.9 261.6 L837.3 262.9 L843.9 265.3 L850.9 266.3 L862.9 265.3 L861.9 268.3 L854.9 269.9 L848.9 270.9 L845.9 273.9 L843.9 276.9 L846.9 278.9 L854.9 279.9 L859.9 282.9 L866.9 283.3 L869.9 284.9 L876.9 283.5 L872.9 286.9 L865.9 289.9 L858.9 292.9 L851.9 295.5 L848.5 295.9 L854.9 293.9 L864.9 290.9 L874.9 287.9 L883.9 284.9 L889.9 281.9 L892.9 278.9 L897.9 276.3 L898.9 278.3 L894.9 280.9 L896.9 282.3 L903.9 280.9 L908.9 277.5 L914.9 277.9 L924.9 279.3 L934.9 280.9 L942.9 283.5 L950.9 284.9 L958.9 285.9 L963.8 289.9 L969.8 293.9 L974.8 297.9 L977.8 301.9 L980.4 302.9 L979.8 305.9 L984.8 307.9 L992.8 310.3 L999.8 313.5 L1000.8 318.3 L997.8 316.3 L994.8 315.5 L994.8 319.9 L994.4 327.9 L993.8 337.9 L996.8 343.9 L1002.8 351.9 L1007.8 355.9 L1014.8 357.5
M839.9 279.5 L842.9 277.9 L844.9 279.5 L841.9 280.3 L839.9 279.5
M885.3 287.5 L889.9 285.9 L893.9 286.9 L890.9 288.9 L886.5 289.3 L885.3 287.5
M961.5 297.5 L964.8 297.9 L967.8 303.3 L964.8 301.9 L961.5 297.5
M978.4 307.5 L984.8 308.9 L992.8 311.9 L998.4 315.5 L992.8 313.9 L984.8 311.5 L978.4 307.5
M987.8 244.0 L993.8 237.6 L1002.8 236.0 L1014.8 237.0 L1022.8 238.4 L1014.8 240.4 L1010.8 243.0 L1000.8 246.0 L992.8 245.4 L987.8 244.0
M998.8 231.0 L1008.8 228.0 L1022.8 227.6 L1018.8 230.0 L1008.8 231.6 L998.8 231.0
M1110.4 214.5 L1119.9 213.0 L1129.9 212.0 L1144.9 211.5 L1148.9 210.0 L1165.9 210.0
M1110.4 214.5 L1113.9 216.5 L1119.9 218.0 L1127.9 218.5 L1137.9 218.5 L1145.9 218.5 L1142.9 219.5 L1134.9 220.0 L1128.9 220.5 L1132.9 221.5 L1131.9 223.5 L1127.9 224.0 L1125.9 225.5 L1130.9 226.0 L1134.9 227.0 L1129.9 228.0 L1124.9 228.2 L1119.9 229.0 L1117.4 230.0 L1120.9 231.0 L1127.9 231.0 L1134.9 231.5 L1144.9 230.5 L1151.9 231.0 L1152.9 229.0 L1155.9 227.5 L1159.9 226.5 L1163.9 223.5 L1167.9 222.0 L1171.0 221.3
M1092.4 219.0 L1095.9 217.2 L1102.9 216.0 L1109.9 216.0 L1113.9 217.5 L1119.9 218.5 L1125.9 219.5 L1127.9 221.0 L1123.9 223.5 L1118.9 224.8 L1111.9 225.0 L1104.9 224.0 L1101.9 222.5 L1095.9 221.5 L1092.4 219.0
M1032.0 226.5 L1035.0 224.0 L1040.0 223.2 L1045.5 224.5 L1044.0 226.8 L1038.0 227.5 L1032.0 226.5
M1020.0 227.5 L1023.0 228.5 L1020.0 229.5
M1020.0 232.0 L1026.0 230.5 L1030.0 230.0 L1035.0 231.0 L1043.0 231.5 L1045.0 229.5 L1050.0 229.5 L1054.0 232.0 L1058.0 232.0 L1060.5 233.0 L1058.0 235.0 L1050.0 235.5 L1041.0 236.0 L1034.0 236.5 L1031.0 235.0 L1026.0 234.5 L1020.0 233.5
M1060.5 222.5 L1064.0 222.2 L1072.0 222.5 L1078.0 224.0 L1081.0 225.5 L1079.0 226.5 L1074.0 225.5 L1068.0 225.0 L1064.0 224.5 L1060.5 222.5
M1085.0 224.0 L1090.0 223.2 L1096.9 224.0 L1103.9 222.0 L1104.9 223.5 L1099.9 225.0 L1102.9 226.5 L1101.9 228.5 L1095.9 229.0 L1091.9 228.5 L1093.4 226.5 L1089.0 226.2 L1085.0 224.0
M1071.0 231.5 L1076.0 230.0 L1084.0 230.0 L1088.5 231.0 L1089.0 233.5 L1086.0 235.5 L1080.0 235.5 L1076.0 233.5 L1072.0 233.0 L1071.0 231.5
M1091.9 234.0 L1095.9 232.5 L1101.9 232.0 L1109.9 231.0 L1114.9 232.0 L1119.9 233.0 L1129.9 233.0 L1139.9 232.5 L1148.9 232.0 L1152.9 234.0 L1150.9 236.5 L1143.9 236.0 L1134.9 235.8 L1124.9 235.5 L1115.9 235.5 L1107.9 235.0 L1102.9 236.0 L1096.9 236.5 L1092.9 235.5 L1091.9 234.0
M1020.0 240.0 L1025.0 240.5 L1030.0 241.5 L1039.0 242.5 L1045.0 242.0 L1049.0 241.0 L1050.5 244.0 L1052.5 244.0 L1052.0 241.0 L1055.0 240.0 L1064.0 239.8 L1061.5 241.0 L1063.0 244.0 L1065.0 246.5 L1070.0 248.0 L1076.5 249.5 L1076.0 251.5 L1072.0 252.0 L1070.5 254.0
M1020.0 249.0 L1035.5 249.0 L1035.5 249.4 L1020.0 249.4
M1020.0 252.0 L1026.0 252.0 L1031.0 253.5 L1027.5 255.5 L1025.0 256.5
M1025.0 256.5 L1030.0 254.5 L1040.0 255.0 L1047.0 257.2 L1050.0 257.5 L1052.0 256.0 L1050.0 254.5 L1054.0 252.5 L1062.0 252.5 L1065.0 254.5 L1070.0 254.5 L1075.5 257.5 L1077.0 256.5 L1084.0 255.5 L1086.0 254.0 L1082.0 252.0 L1086.0 249.5 L1090.0 250.0 L1093.9 249.5 L1098.9 251.0 L1100.4 253.5 L1099.4 255.5 L1095.9 256.0 L1094.9 258.5 L1093.7 256.5 L1093.9 254.5 L1090.0 254.0 L1087.0 253.0 L1085.0 251.5
M1071.0 242.0 L1076.0 239.5 L1082.0 238.5 L1089.0 238.5 L1091.9 241.0 L1091.9 244.0 L1090.0 246.0 L1085.0 246.5 L1080.0 245.0 L1075.0 244.0 L1071.0 242.0
M1094.9 238.0 L1102.9 237.5 L1109.9 238.0 L1113.9 238.5 L1108.9 241.0 L1103.9 243.0 L1099.9 244.5 L1095.9 244.0 L1094.4 241.0 L1094.9 238.0
M1115.9 243.0 L1118.9 240.5 L1123.9 239.0 L1128.9 238.5 L1131.9 242.0 L1135.9 239.5 L1142.9 238.5 L1148.9 239.5 L1149.9 242.0 L1154.9 243.0 L1161.9 241.5 L1164.9 242.0 L1167.9 243.5 L1171.0 244.5
M1115.9 243.0 L1117.4 246.5 L1120.9 247.5 L1124.9 249.0 L1132.9 249.5 L1139.9 250.0 L1144.9 251.0 L1149.9 250.0 L1155.9 249.5 L1161.9 251.0 L1166.9 252.0 L1171.0 254.5
M1132.9 249.5 L1132.4 254.0 L1128.9 256.5 L1125.9 258.5 L1122.9 257.0 L1121.4 254.0 L1118.4 252.5 L1114.9 254.5 L1112.9 252.0 L1108.9 250.5 L1105.9 246.0 L1102.9 244.5
M1144.9 251.0 L1147.9 252.0 L1146.4 254.5 L1147.9 257.0 L1145.9 258.5 L1139.9 260.0 L1132.9 260.5 L1129.9 261.5 L1125.9 265.0 L1121.9 267.0 L1114.9 268.5 L1113.4 270.0 L1107.9 271.9 L1102.9 275.4 L1098.9 279.4 L1099.4 282.9 L1104.9 283.9 L1106.9 287.9 L1115.9 288.4 L1121.9 290.4 L1127.9 292.4 L1133.9 294.0
M1125.9 269.0 L1129.9 264.0 L1131.4 262.0 L1134.9 264.0 L1141.9 265.5 L1148.9 267.0 L1151.9 268.5 L1148.9 269.5 L1143.9 269.0 L1140.9 267.5 L1137.9 269.5 L1132.9 270.0 L1128.9 269.0 L1125.9 269.0
M1136.9 272.4 L1140.9 271.4 L1145.4 271.4 L1143.9 272.9 L1139.9 273.4 L1136.9 272.4
M1149.7 273.4 L1150.9 272.1 L1152.4 273.4 L1150.9 274.7 L1149.7 273.4
M1171.0 272.4 L1163.9 272.4 L1159.9 273.9 L1159.4 276.9 L1161.9 279.4 L1159.9 281.9 L1157.4 283.4 L1161.9 285.9 L1164.9 288.4 L1163.9 291.9 L1161.9 294.0
M1171.0 264.0 L1161.9 264.5 L1157.9 266.0 L1161.9 267.0 L1167.9 266.5 L1171.0 266.0
M1171.0 254.8 L1168.9 254.5 L1163.9 255.5 L1161.9 258.0 L1166.9 258.5 L1171.0 257.5
M1165.0 210.0 L1205.0 210.0 L1210.0 211.5 L1217.0 212.0 L1218.0 212.8 L1215.0 213.5 L1209.0 214.0 L1203.0 214.5 L1197.0 215.5 L1200.0 216.5 L1207.0 215.8 L1198.0 217.2 L1191.0 217.5 L1185.0 219.5 L1178.0 221.0 L1171.0 221.5 L1165.0 221.3
M1217.0 214.5 L1222.0 213.5 L1235.0 213.3 L1246.9 213.5 L1249.9 214.5 L1256.9 212.5 L1260.9 213.0 L1269.9 213.0 L1271.9 211.8 L1278.9 211.5 L1278.9 210.0 L1297.9 210.0 L1298.9 209.3 L1316.0 209.3
M1270.9 213.0 L1278.9 214.5 L1278.9 211.5
M1217.0 214.5 L1215.5 216.5 L1205.0 218.0 L1198.0 219.0 L1199.0 220.5 L1205.0 220.5 L1202.0 222.5 L1193.0 223.2 L1185.0 224.0 L1177.0 224.8 L1177.0 226.2 L1184.0 226.5 L1191.0 227.0 L1200.0 227.0 L1193.0 228.2 L1184.0 228.5 L1186.5 230.5 L1191.0 231.3 L1205.0 231.5 L1221.0 231.7 L1227.0 233.5 L1233.0 236.0 L1237.9 239.0 L1242.4 242.0 L1239.4 244.0 L1240.9 245.5 L1247.9 246.5 L1254.9 248.0 L1256.4 250.5 L1254.9 252.5 L1249.9 254.5 L1246.9 256.5 L1245.4 258.5 L1247.4 260.0 L1246.4 262.0 L1251.4 264.5 L1251.9 267.0 L1254.9 270.0 L1259.9 273.4 L1264.9 277.1 L1272.9 277.4 L1276.4 279.4 L1283.4 279.4 L1285.9 275.4 L1285.4 271.9 L1291.9 269.0 L1292.9 265.5 L1295.4 263.5 L1301.9 262.5 L1307.9 261.5 L1312.9 260.3 L1316.0 260.2
M1242.4 249.0 L1244.9 247.2 L1250.9 246.8 L1254.9 248.5 L1252.9 251.5 L1247.9 252.5 L1243.9 251.2 L1242.4 249.0
M1165.0 240.5 L1166.0 243.0 L1173.0 245.0 L1181.0 246.5 L1188.0 248.0 L1194.0 248.5 L1198.0 252.0 L1192.5 254.0 L1197.0 255.0 L1205.0 257.0 L1211.0 259.0 L1217.5 259.5 L1212.0 264.0 L1206.0 264.5 L1202.0 262.0 L1199.0 260.5 L1194.5 262.0 L1196.0 264.0 L1202.0 265.5 L1205.5 267.5 L1206.5 271.4 L1200.0 271.9 L1201.5 274.4 L1199.0 273.4 L1192.0 273.4 L1183.0 271.4 L1179.0 269.0 L1173.0 267.0 L1165.0 268.0
M1165.0 252.5 L1171.0 254.5 L1176.0 255.5 L1178.0 258.0 L1174.0 261.0 L1172.0 263.0 L1165.0 264.5
M1165.0 255.5 L1169.0 256.0 L1169.5 258.0 L1165.0 258.5
M1165.0 273.4 L1173.0 272.4 L1179.0 274.4 L1183.0 276.4 L1189.5 276.7 L1189.8 281.9 L1192.0 283.4 L1196.5 285.4 L1200.5 283.9 L1206.5 279.4 L1210.0 280.9 L1215.0 285.4 L1219.0 288.4 L1217.5 290.9 L1221.0 292.4 L1225.0 294.0
M1161.9 293.9 L1157.9 294.9 L1154.9 297.9 L1156.9 302.9 L1152.9 306.3 L1147.9 303.9 L1144.9 299.9 L1143.9 294.9 L1133.9 294.3
M1224.9 293.3 L1227.9 293.9 L1235.9 296.9 L1239.5 300.9 L1237.9 304.9 L1229.9 306.9 L1221.9 308.3 L1209.9 309.9 L1199.9 310.9 L1189.9 313.9 L1184.9 319.5 L1191.9 314.9 L1201.9 312.3 L1205.9 315.9 L1207.9 319.9 L1213.9 320.3 L1222.9 319.5 L1223.9 322.9 L1213.9 325.9 L1203.9 329.5 L1201.9 326.9 L1205.9 324.3 L1197.9 325.9 L1189.9 328.9 L1185.9 333.9 L1187.9 334.9 L1177.9 337.9 L1169.9 340.9 L1164.9 343.9 L1166.9 348.9 L1164.3 345.9 L1167.9 352.9 L1161.9 356.9 L1155.9 359.9 L1149.9 362.9 L1146.9 367.9 L1148.9 374.1
M1236.9 304.3 L1239.5 308.3 L1235.9 310.9 L1241.9 311.5 L1248.9 313.9 L1249.9 317.9 L1247.9 320.3 L1243.9 317.9 L1238.9 318.9 L1233.9 316.9 L1226.9 316.3 L1230.9 311.9 L1236.9 304.3
M1206.9 319.9 L1213.9 320.7 L1216.9 322.3 L1209.9 322.7 L1206.9 319.9
M1315.9 209.4 L1328.9 209.0 L1346.9 209.6 L1356.9 211.0 L1363.9 211.6 L1356.9 213.0 L1342.9 213.6 L1323.9 213.4
M1356.9 213.0 L1357.9 216.0 L1368.9 215.6 L1380.9 215.0 L1394.9 215.6 L1393.9 217.0 L1382.9 218.0 L1372.9 220.0 L1367.9 223.0 L1369.9 226.0 L1371.9 229.0 L1362.9 230.0 L1367.9 233.0 L1368.9 236.0 L1362.9 239.0 L1358.9 241.0 L1357.9 244.0 L1350.9 243.0 L1348.9 246.0 L1359.9 248.0 L1355.9 250.4 L1344.9 249.6 L1348.9 252.0 L1338.9 254.0 L1323.9 256.0 L1315.9 260.2
M1351.3 262.9 L1357.9 260.4 L1368.9 261.6 L1378.9 260.4 L1386.9 260.4 L1389.9 263.9 L1384.9 266.9 L1376.9 268.9 L1368.9 269.5 L1360.9 268.3 L1356.9 265.9 L1359.9 264.9 L1351.3 262.9
M1402.5 304.3 L1405.9 297.9 L1410.9 295.5 L1416.9 294.9 L1417.9 298.9 L1414.9 302.9 L1408.9 304.3 L1402.5 304.3
M1433.5 293.9 L1431.9 291.9 L1424.9 289.9 L1429.9 288.3 L1431.3 285.3 L1425.9 284.3 L1419.9 285.5 L1416.9 289.9 L1418.9 293.9 L1425.9 295.5 L1421.9 298.9 L1420.9 302.9 L1426.9 303.9 L1420.9 306.9 L1417.9 309.5 L1424.9 308.9 L1433.5 308.3
M1433.5 311.5 L1430.9 313.9 L1422.5 314.3 L1423.9 316.9 L1429.9 318.3 L1433.5 320.9
M1433.5 328.9 L1420.9 328.9 L1408.9 328.5 L1405.9 330.3 L1406.9 335.9 L1405.9 339.9 L1403.9 344.9 L1406.9 348.9 L1410.9 349.5 L1415.9 351.9 L1420.9 350.3 L1428.9 349.5 L1433.5 348.9
M1433.5 354.9 L1426.9 353.5 L1418.9 352.9 L1415.9 352.1 L1411.9 357.9 L1406.9 361.9 L1403.9 366.9 L1401.9 371.9 L1398.9 374.1
M283.9 404.0 L285.9 403.0 L289.9 408.0 L293.9 413.0 L297.9 417.0 L302.9 421.0 L304.9 424.0 L303.9 426.0 L307.9 428.4 L316.9 427.0 L325.9 425.4 L331.9 423.6 L332.9 427.0 L329.9 434.0 L325.9 441.0 L320.9 446.9 L314.9 451.9 L306.9 456.3 L299.9 461.9 L293.9 467.9 L290.5 473.9 L288.5 478.9 L290.9 481.9 L290.5 487.9 L293.9 492.9 L294.9 499.9 L293.9 508.3 L288.9 510.9 L281.9 513.9 L274.9 519.5 L274.9 523.9 L277.9 527.9 L276.9 531.9 L269.9 535.5 L266.5 538.3 L266.9 543.9 L262.9 548.9 L257.9 554.1
M295.9 400.0 L298.9 405.0 L302.9 411.0 L303.9 418.0 L304.9 422.0 L310.9 421.0 L320.9 418.4 L330.9 415.0 L339.9 411.6 L346.9 409.0 L352.9 406.0 L356.9 402.0 L360.9 398.0 L364.5 393.0 L361.9 390.0 L356.9 387.0 L352.9 384.0 L350.9 381.6 L344.9 385.0 L338.9 387.0 L333.9 387.0 L333.9 383.0 L331.9 385.0 L329.9 381.0 L325.9 377.0 L322.9 373.0 L322.9 370.4 L327.9 369.0 L331.9 373.0 L337.9 376.0 L344.9 379.0 L350.9 378.0 L353.9 379.0 L354.9 382.0 L364.9 384.0 L374.8 384.0 L386.8 383.4 L393.8 388.0 L398.8 392.0 L402.8 397.0 L409.8 396.4 L411.8 403.0 L414.8 410.0 L418.8 418.0 L421.8 425.0 L424.8 431.0 L427.8 436.0 L432.8 432.0 L434.4 426.0 L436.8 420.0 L437.2 413.0 L442.8 411.0 L447.0 407.6
M436.8 430.0 L440.8 432.0 L442.8 437.0 L441.8 441.0 L437.8 441.9 L435.2 438.0 L434.8 433.0 L436.8 430.0
M325.9 496.3 L328.9 498.9 L330.9 505.9 L327.9 513.9 L324.9 522.9 L320.9 531.9 L314.9 536.3 L308.9 535.9 L305.9 530.9 L304.9 525.9 L307.9 520.9 L307.9 514.9 L308.9 508.9 L316.9 505.9 L321.9 500.9 L325.9 496.3
M149.4 442.3 L157.0 441.6 L166.0 441.6 L171.0 445.9 L176.0 446.9 L180.0 445.5 L184.0 448.9 L184.0 454.9 L181.4 462.9 L186.0 467.9 L192.0 474.9 L196.0 481.9 L197.0 487.9 L199.0 493.9 L195.0 499.9 L193.0 505.9 L191.4 510.9 L194.0 516.9 L198.0 522.9 L202.0 527.9 L203.0 535.9 L205.0 541.9 L210.0 547.9 L214.0 554.1
M447.0 407.6 L454.0 402.0 L462.0 397.0 L468.0 395.0 L473.0 393.0 L475.6 391.0 L479.0 394.0 L482.0 399.0 L486.0 404.0 L488.0 411.6 L493.0 412.0 L498.0 409.6 L500.0 415.0 L502.0 422.0 L503.0 428.0 L502.0 435.0 L504.0 439.0 L508.0 444.9 L512.0 450.9 L516.9 454.9 L520.9 456.3 L522.9 453.9 L520.9 448.9 L519.9 444.9 L515.9 441.6 L511.0 437.6 L507.0 433.0 L505.2 431.0 L507.0 425.0 L508.4 419.6 L511.6 419.6 L513.0 423.0 L516.9 424.0 L519.9 428.0 L524.9 430.0 L526.3 434.4 L530.9 431.0 L537.9 427.0 L540.9 424.0 L541.5 419.0 L538.9 413.0 L533.9 408.0 L528.9 404.0 L529.5 400.0 L533.9 396.0 L538.9 394.6 L542.9 396.0 L545.9 399.0 L545.5 396.0 L551.9 394.0 L557.9 392.0 L567.9 389.6 L573.9 386.0 L577.5 383.6
M538.3 402.0 L541.9 400.0 L546.9 400.4 L545.9 403.6 L541.9 405.6 L538.9 404.4 L538.3 402.0
M582.9 385.0 L585.9 384.4 L586.9 387.0 L584.3 392.0 L581.9 393.6 L580.3 391.0 L580.9 387.6 L582.9 385.0
M491.6 443.9 L497.0 443.5 L502.0 445.9 L507.0 450.9 L513.0 453.9 L518.9 458.9 L524.9 464.9 L527.9 467.9 L528.9 477.9 L527.9 479.9 L521.9 475.5 L516.9 470.9 L512.0 464.9 L506.0 458.3 L500.0 451.9 L495.0 447.9 L491.6 443.9
M527.9 477.9 L533.9 479.5 L541.9 480.3 L550.9 481.9 L559.9 483.9 L563.9 484.9 L562.3 486.5 L553.9 485.3 L543.9 483.9 L533.9 482.3 L527.9 480.3 L527.9 477.9
M567.9 485.9 L571.9 484.9 L575.9 485.5 L572.9 486.9 L568.9 487.3 L567.9 485.9
M578.9 485.9 L583.9 485.1 L589.9 484.9 L587.9 486.3 L581.9 486.9 L578.9 485.9
M575.9 488.5 L579.9 488.9 L582.3 490.3 L578.9 490.3 L575.9 488.5
M591.9 490.3 L595.9 486.9 L601.9 485.5 L605.9 484.9 L601.9 487.5 L596.9 489.5 L592.9 491.5 L591.9 490.3
M539.5 458.9 L541.9 453.9 L548.9 452.9 L554.9 449.9 L560.9 444.9 L566.9 439.6 L570.9 440.0 L572.9 442.9 L576.9 443.5 L572.9 446.9 L570.9 450.9 L572.9 454.9 L575.9 456.9 L571.9 458.9 L569.9 462.9 L567.9 466.9 L565.9 471.5 L561.9 472.3 L557.9 469.9 L550.9 469.5 L545.9 467.9 L542.9 464.9 L540.9 461.9 L539.5 458.9
M578.9 459.9 L581.9 456.9 L588.9 456.9 L594.9 456.3 L598.9 455.3 L594.9 458.9 L589.9 459.9 L583.9 461.5 L580.9 463.9 L584.9 463.5 L590.9 461.5 L588.9 463.9 L584.9 466.9 L587.9 469.9 L590.9 473.9 L589.5 476.3 L585.9 473.9 L583.5 468.9 L580.9 469.9 L581.5 474.9 L579.9 476.9 L577.5 474.9 L577.9 469.9 L575.9 465.9 L578.9 459.9
M606.3 454.3 L609.5 453.5 L610.9 456.9 L609.5 461.9 L607.5 460.9 L608.3 457.9 L606.3 459.9 L606.3 454.3
M600.9 469.5 L604.9 469.5 L602.9 471.1 L600.9 469.5
M608.9 468.9 L615.9 468.5 L618.9 470.3 L613.9 470.9 L608.9 468.9
M581.9 405.0 L586.9 404.0 L588.3 408.0 L585.9 412.0 L587.9 417.0 L593.9 418.4 L594.9 422.0 L591.9 421.0 L588.9 419.0 L584.9 419.6 L580.9 418.4 L581.9 415.0 L579.5 412.0 L580.9 408.0 L581.9 405.0
M586.9 425.0 L591.9 424.4 L596.9 423.0 L599.9 426.0 L597.9 429.0 L593.9 427.0 L592.9 431.0 L589.9 432.0 L588.9 428.0 L586.9 425.0
M586.9 437.0 L591.9 435.0 L597.9 433.0 L601.9 432.0 L603.5 436.0 L602.3 441.0 L599.9 443.5 L597.9 440.0 L594.9 441.0 L591.9 439.0 L588.9 438.4 L586.9 437.0
M569.9 434.0 L573.9 430.4 L577.9 427.0 L578.3 428.4 L574.3 432.0 L570.9 434.6 L569.9 434.0
M617.5 462.9 L622.9 461.5 L628.9 462.3 L630.9 465.9 L634.9 467.9 L639.9 465.5 L647.9 464.9 L655.9 466.9 L663.9 469.9 L669.8 472.9 L675.8 476.9 L678.8 478.9 L677.8 481.9 L681.8 484.9 L685.8 487.9 L689.8 490.9 L686.8 491.9 L680.8 489.9 L675.8 485.9 L669.8 483.9 L664.9 484.9 L660.9 487.5 L654.9 486.9 L649.9 484.9 L644.9 485.5 L642.9 483.9 L646.9 480.9 L643.9 477.9 L638.9 474.9 L634.9 472.9 L629.9 471.9 L625.9 470.9 L622.9 467.9 L620.9 464.9 L617.5 462.9
M622.9 466.3 L628.9 467.1
M629.9 476.9 L631.9 476.3 L631.5 480.3 L629.9 479.9 L629.9 476.9
M680.8 476.9 L687.8 475.5 L692.8 473.9 L695.8 470.9 L692.2 468.9 L689.8 467.5 L694.8 468.9 L698.2 471.9 L695.8 474.9 L689.8 477.5 L683.8 478.3 L680.8 476.9
M702.8 475.5 L705.8 477.9 L707.8 480.3 L705.8 479.5 L703.4 476.9 L702.8 475.5
M710.8 479.5 L713.8 480.9 L712.8 481.9 L710.8 479.5
M716.8 481.9 L720.8 483.9 L718.8 484.3 L716.8 481.9
M721.8 486.9 L724.8 488.3 L722.8 488.9 L721.8 486.9
M724.8 484.9 L727.8 487.9 L726.2 487.5 L724.8 484.9
M727.8 490.9 L731.4 492.3 L729.4 492.7 L727.8 490.9
M562.9 554.1 L561.9 551.9 L558.9 546.9 L557.9 541.9 L554.9 538.3 L555.9 531.9 L557.9 525.9 L563.9 522.9 L572.9 519.9 L581.9 516.9 L587.9 512.9 L590.9 508.9 L593.9 505.9 L597.9 502.9 L603.9 501.5 L609.9 504.3 L613.9 501.9 L616.9 497.9 L620.9 495.9 L624.9 493.5 L626.9 495.5 L633.9 495.9 L638.9 495.5 L639.9 498.3 L636.9 501.9 L634.9 504.9 L639.9 506.9 L645.9 509.9 L651.9 512.9 L655.9 511.5 L656.9 505.9 L657.9 499.9 L658.9 494.9 L660.5 492.3 L662.3 495.9 L663.9 500.9 L666.9 503.9 L669.8 508.9 L672.8 514.9 L678.8 518.9 L684.8 523.9 L688.8 527.9 L692.8 532.9 L696.8 536.9 L699.4 541.9 L699.8 547.9 L698.8 554.1
M865.9 393.0 L868.5 393.4 L867.3 394.6 L865.9 393.0
M871.9 395.6 L873.9 395.6 L873.9 397.0 L871.9 397.0 L871.9 395.6
M874.9 396.4 L877.9 397.6 L879.9 399.0
M879.9 400.0 L882.9 399.0 L884.9 401.6 L882.5 403.6 L880.5 402.0 L879.9 400.0
M746.0 503.5 L747.4 504.9 L748.6 507.9 L750.6 509.5 L748.0 508.3 L746.6 505.9 L746.0 503.5
M784.0 512.9 L789.4 512.3 L790.0 514.9 L784.6 515.1 L784.0 512.9
M789.0 509.5 L792.0 508.3 L794.6 508.7 L792.0 510.3 L789.0 509.5
M737.0 520.9 L740.0 520.3 L745.0 523.9 L749.0 526.9 L747.0 527.5 L742.0 524.9 L738.0 522.9 L737.0 520.9
M1081.1 410.0 L1083.9 410.4 L1091.9 412.4 L1099.9 411.6 L1105.9 414.0 L1110.9 417.6 L1117.9 419.0 L1123.9 419.6 L1127.9 423.0 L1131.9 426.0 L1132.9 429.6 L1137.9 431.0 L1142.9 435.0 L1148.9 437.0 L1150.3 438.4 L1151.5 435.0 L1154.9 433.0 L1158.9 436.0 L1160.9 441.0 L1161.9 447.9 L1157.9 452.3 L1153.9 456.9 L1149.9 459.9 L1148.3 463.9 L1152.3 467.9 L1148.3 471.9 L1147.5 476.9 L1151.9 482.9 L1155.9 487.9 L1159.9 493.9 L1164.9 500.9 L1169.9 504.9 L1176.9 508.9 L1183.9 512.9 L1187.5 515.9 L1187.9 525.9 L1185.9 535.9 L1183.9 545.9 L1182.9 554.1
M1148.9 374.0 L1150.9 376.0 L1151.5 382.0 L1149.5 384.4 L1145.9 382.0 L1142.9 377.0 L1139.9 372.0 L1135.9 369.6 L1129.9 368.4 L1123.9 369.0 L1117.9 370.0 L1111.9 371.6 L1103.9 370.0 L1095.9 371.6 L1090.9 376.0 L1088.9 382.0 L1088.3 389.0 L1089.5 396.0 L1092.9 401.0 L1097.9 404.0 L1103.9 405.0 L1110.9 403.0 L1114.9 399.0 L1115.9 397.0 L1121.9 395.6 L1127.5 395.6 L1126.9 399.0 L1123.9 403.0 L1121.9 408.0 L1120.9 412.4 L1127.9 412.4 L1135.9 412.4 L1139.5 415.0 L1140.3 420.0 L1138.3 425.0 L1139.9 429.0 L1143.9 432.0 L1149.9 433.0 L1154.9 431.6 L1158.9 432.4 L1163.9 434.0 L1167.9 429.6 L1170.9 426.0 L1175.9 425.6 L1180.9 424.0 L1182.9 422.4 L1183.9 425.0 L1187.9 424.0 L1192.9 427.0 L1199.9 428.4 L1207.9 429.0 L1213.9 427.6 L1219.9 427.6 L1220.9 431.0 L1225.9 435.0 L1232.8 441.0 L1239.8 442.3 L1249.8 442.9 L1255.8 446.9 L1258.8 452.9 L1258.2 458.9 L1264.8 460.9 L1265.8 463.5 L1268.8 461.9 L1275.8 463.9 L1283.8 466.9 L1291.8 467.9 L1302.0 470.3
M1180.9 428.0 L1182.9 426.0 L1183.9 429.0 L1183.5 432.0 L1181.5 431.6 L1180.9 428.0
M1214.9 428.4 L1218.9 428.0 L1220.3 430.0 L1216.3 430.4 L1214.9 428.4
M1134.3 394.0 L1137.9 391.6 L1143.9 390.4 L1151.9 391.6 L1159.9 395.0 L1167.9 397.6 L1172.9 399.0 L1167.9 400.4 L1161.9 399.0 L1155.9 396.0 L1148.9 394.0 L1141.9 393.0 L1137.9 394.0 L1134.3 394.0
M1154.9 379.6 L1162.3 379.6 L1162.3 382.0
M1157.9 385.0 L1160.3 385.0 L1160.5 388.0 L1158.3 387.6 L1157.9 385.0
M1158.9 404.6 L1162.9 404.0 L1165.9 405.2 L1162.3 406.4 L1158.9 405.6 L1158.9 404.6
M1172.3 405.0 L1176.9 403.0 L1178.9 400.4 L1185.9 401.0 L1190.9 402.4 L1193.5 403.6 L1188.9 404.0 L1183.9 405.0 L1179.9 406.0 L1175.9 405.0 L1172.3 405.0
M1198.3 404.6 L1202.3 404.2 L1203.9 405.6 L1199.9 406.4 L1198.3 404.6
M1301.9 470.7 L1306.9 474.9 L1311.9 475.5 L1313.9 481.9 L1311.9 486.9 L1306.9 491.9 L1299.9 499.9 L1298.9 507.9 L1296.9 514.9 L1295.9 519.9 L1290.9 525.9 L1284.0 528.9 L1273.0 531.5 L1267.0 535.5 L1264.0 539.9 L1264.0 545.9 L1259.0 550.9 L1256.0 554.1
M1398.9 374.0 L1399.9 373.0 L1393.9 375.0 L1387.9 379.0 L1384.9 385.0 L1380.5 390.0 L1377.9 396.0 L1380.5 401.0 L1379.9 408.0 L1378.5 413.0 L1375.9 415.0 L1378.5 419.0 L1379.9 424.0 L1384.9 428.0 L1388.9 431.0 L1391.9 435.0 L1396.9 439.0 L1402.9 442.9 L1408.9 445.9 L1414.9 445.9 L1420.9 444.5 L1428.9 444.9 L1433.5 445.5
M214.0 554.0 L215.0 561.0 L220.0 564.4 L224.9 563.0 L230.9 561.6 L242.9 561.0 L249.9 559.0 L255.9 554.4 L257.9 554.0
M396.4 606.4 L400.8 606.0 L402.8 608.0 L400.8 609.6 L396.4 609.6 L396.4 606.4
M149.4 674.3 L157.0 673.3 L167.0 671.9 L177.0 669.5 L185.0 670.5 L190.0 672.5 L197.0 669.9 L204.0 670.9 L209.0 669.5 L220.9 669.3 L228.9 671.3 L238.9 671.5 L248.9 671.3 L256.9 669.9 L264.9 668.5 L270.9 665.3 L274.9 665.9 L280.9 667.3 L287.9 669.5 L294.9 666.5 L304.9 664.9 L314.9 663.3 L324.9 661.5 L333.9 658.5 L341.9 657.3 L350.9 657.3 L356.9 660.3 L366.9 662.9 L376.8 662.3 L384.8 663.3 L395.8 663.3 L399.8 666.5 L398.8 669.5 L392.8 671.5 L397.2 672.5 L393.8 675.5 L404.8 676.3 L408.8 672.9 L414.8 669.9 L424.8 668.3 L432.8 664.9 L440.8 662.9 L447.0 661.3
M562.9 554.0 L564.9 557.0 L561.5 561.0 L563.9 564.0 L569.9 565.4 L577.9 562.0 L585.9 561.0 L592.9 560.4 L597.9 557.6 L605.9 555.6 L615.9 554.4 L623.9 555.6 L629.9 558.0 L632.9 562.4 L636.9 564.4 L639.9 561.6 L642.9 559.0 L642.3 564.0 L644.9 565.6 L648.9 567.6 L651.9 573.0 L657.9 575.0 L663.9 576.4 L667.8 574.0 L672.8 577.0 L678.8 574.0 L685.8 572.4 L688.8 566.0 L692.8 560.0 L696.8 555.0 L698.8 554.0
M667.4 583.0 L672.8 582.4 L680.8 582.4 L680.2 587.0 L677.8 590.4 L672.8 590.4 L669.8 587.0 L667.4 583.0
M447.0 661.3 L461.0 660.9 L465.0 658.5 L469.0 661.3 L480.0 661.3 L492.0 661.9 L508.0 660.9 L517.9 656.3 L523.9 658.3 L528.9 660.3 L543.9 659.9 L548.9 658.3 L556.9 657.5 L563.9 660.3 L571.9 660.3 L579.9 661.3 L587.9 659.5 L597.9 659.9 L609.9 660.3 L619.9 659.3 L631.9 658.3 L633.5 655.5 L637.9 660.3 L649.9 660.3 L669.8 660.3 L673.8 663.5 L682.8 664.9 L691.8 666.3 L701.8 665.5 L711.8 667.9 L719.8 668.9 L729.8 671.9 L742.0 672.3
M742.0 672.3 L753.0 672.3 L762.0 674.3 L762.6 676.9 L756.0 680.9 L747.0 682.9 L740.0 685.3 L736.0 688.3 L736.0 691.5 L740.0 694.3 L747.4 695.9 L741.0 696.9 L735.0 697.3 L729.0 697.9 L715.0 697.9 L710.0 702.3 L717.0 705.5 L729.0 708.3 L735.0 707.5 L745.0 708.9 L755.0 710.9 L769.0 712.9 L785.0 712.9 L794.0 714.3 L801.0 712.3 L812.9 712.9 L824.9 711.3 L834.9 712.9 L846.9 714.5 L858.9 715.5 L871.9 716.3 L878.9 715.3 L890.9 715.5 L900.9 716.3 L914.9 715.9 L926.5 715.3 L926.5 713.5 L914.9 713.5 L902.9 712.9 L892.9 711.5 L889.3 708.9 L891.3 705.9 L883.9 704.5 L877.3 703.5 L886.9 703.9 L904.9 702.9 L913.3 700.9 L910.9 698.9 L900.9 697.9 L890.9 697.3 L882.9 697.3 L874.9 694.9 L871.3 691.5 L873.9 690.3 L884.9 691.3 L892.9 692.3 L900.9 691.3 L908.9 689.5 L914.9 688.3 L915.9 685.5 L926.9 685.9 L936.9 684.3 L946.9 683.5 L954.9 682.5 L964.8 683.3 L978.8 683.3 L994.8 682.9 L1006.8 682.9 L1014.8 682.3 L1022.8 682.3 L1030.8 681.5 L1037.0 683.9
M852.5 695.3 L856.9 694.3 L864.9 695.3 L868.5 697.9 L860.9 698.5 L854.9 697.3 L852.5 695.3
M982.8 679.9 L986.8 679.5 L993.8 681.5 L986.8 681.3 L982.8 679.9
M999.2 679.9 L1006.8 680.3 L1013.8 680.3 L1008.8 681.9 L1001.8 681.5 L999.2 679.9
M767.4 563.4 L771.0 565.0 L774.6 567.0 L776.0 571.0 L780.0 571.6 L786.0 573.0 L788.6 574.0 L787.4 577.6 L784.0 579.6 L781.4 583.6 L777.0 584.4 L775.0 582.0 L777.4 580.0 L773.0 578.0 L774.0 574.0 L773.0 570.0 L770.0 566.0 L767.4 563.4
M768.0 581.6 L770.0 583.0 L773.0 582.0 L773.4 586.0 L771.0 589.0 L768.0 591.6 L764.0 594.0 L760.0 598.0 L755.0 599.6 L750.0 599.4 L746.0 597.6 L747.4 595.0 L753.0 592.4 L758.0 590.4 L762.0 587.6 L765.0 584.0 L768.0 581.6
M1256.0 554.0 L1250.8 558.0 L1244.8 563.6 L1237.8 564.4 L1231.8 563.6 L1229.4 561.6 L1231.8 566.0 L1235.8 569.6 L1232.8 574.0 L1225.9 576.4 L1216.9 577.0 L1215.5 582.0 L1206.9 583.0 L1205.9 585.6 L1210.9 587.0 L1206.9 589.0 L1203.9 595.0 L1197.9 597.6 L1196.9 599.6 L1203.5 601.0 L1201.9 604.0 L1196.9 607.0 L1192.9 611.0 L1191.9 615.0 L1194.9 619.0 L1199.9 622.9 L1205.5 623.9 L1203.9 625.5 L1195.9 626.5 L1188.9 626.5 L1180.9 623.9 L1173.9 621.0 L1169.9 616.0 L1167.5 609.0 L1167.9 604.0 L1172.3 600.4 L1168.9 599.6 L1172.9 594.0 L1176.9 592.4 L1177.9 587.0 L1174.9 587.0 L1173.9 591.0 L1172.3 589.0 L1173.5 584.0 L1175.5 576.0 L1175.9 571.0 L1178.9 565.0 L1181.9 559.6 L1182.9 554.0
M1170.9 618.0 L1177.9 621.0 L1183.9 621.9 L1186.9 618.4 L1192.3 616.4
M1219.5 615.4 L1223.9 613.6 L1229.8 613.4 L1231.8 615.0 L1227.8 616.4 L1222.9 616.6 L1219.5 615.4
M1037.0 683.9 L1046.0 683.9 L1052.0 685.3 L1060.0 685.3 L1068.0 683.9 L1075.9 685.3 L1079.9 683.9 L1078.9 682.5 L1071.0 681.9 L1069.0 679.9 L1067.6 677.5 L1073.0 676.9 L1079.9 677.9 L1087.9 678.9 L1099.9 680.3 L1111.9 680.3 L1119.5 677.5 L1122.9 678.9 L1133.9 680.3 L1145.9 681.5 L1151.9 679.5 L1157.9 680.3 L1165.9 681.5 L1175.9 681.3 L1185.9 680.3 L1194.9 678.9 L1197.9 675.9 L1196.9 672.3 L1193.9 668.9 L1194.9 665.5 L1197.9 660.9 L1205.9 656.5 L1214.9 653.9 L1223.9 651.9 L1231.8 649.5 L1233.8 650.9 L1227.8 652.9 L1217.9 654.9 L1216.9 657.9 L1209.9 659.9 L1203.9 662.5 L1204.9 664.9 L1212.9 666.9 L1216.9 670.9 L1219.9 675.5 L1221.5 679.5 L1217.9 682.9 L1207.9 685.5 L1195.9 687.9 L1185.9 689.5 L1175.9 690.3 L1162.9 690.3 L1166.9 691.9 L1174.9 693.5 L1171.9 694.9 L1162.9 694.3 L1159.5 695.9 L1161.9 698.3 L1169.9 700.9 L1179.9 701.9 L1191.9 703.9 L1201.9 705.3 L1211.9 705.9 L1221.9 707.5 L1229.8 709.5 L1239.8 707.5 L1251.8 705.9 L1263.8 704.9 L1275.8 704.5 L1283.8 704.9 L1285.8 706.3 L1287.8 704.9 L1295.8 704.3 L1302.0 704.3
M1169.9 674.9 L1175.9 673.5 L1180.9 672.3 L1181.9 667.9 L1185.9 666.3 L1189.9 667.9 L1192.9 671.9 L1193.9 675.9 L1187.9 677.5 L1179.9 677.9 L1172.9 676.9 L1169.9 674.9
M1073.0 675.5 L1083.9 675.5 L1092.9 675.9 L1093.9 677.5 L1085.9 677.5 L1077.9 677.5 L1073.0 675.5
M1200.9 700.5 L1209.9 700.9 L1219.9 700.3 L1221.9 698.3 L1224.9 699.9 L1223.9 702.3 L1213.9 702.9 L1205.9 702.3 L1200.9 700.5
M1244.2 701.3 L1251.8 698.9 L1259.8 695.5 L1267.8 693.5 L1275.8 693.5 L1281.8 695.5 L1283.8 698.9 L1279.8 700.3 L1269.8 700.9 L1257.8 701.9 L1247.8 702.3 L1244.2 701.3
M1301.9 703.9 L1312.9 702.5 L1324.9 701.3 L1335.3 700.9 L1333.9 698.9 L1328.9 697.5 L1316.9 698.5 L1310.9 697.9 L1310.5 694.9 L1316.9 693.5 L1328.9 691.5 L1336.9 689.5 L1348.9 688.5 L1360.9 687.5 L1372.9 685.5 L1382.9 683.5 L1381.9 680.9 L1379.9 679.9 L1389.9 677.9 L1396.9 675.9 L1401.9 673.3 L1406.9 673.9 L1410.9 675.5 L1414.9 672.5 L1418.9 674.3 L1425.9 673.9 L1433.5 673.3
M1014.1 357.6 L1017.9 359.7 L1020.1 363.8 L1023.8 369.0 L1027.5 372.0 L1029.8 374.6 L1027.5 376.8 L1028.6 378.3 L1032.7 379.4 L1035.7 381.3 L1037.2 383.2 L1036.8 385.4 L1038.7 386.5 L1041.3 387.6 L1043.9 390.6 L1045.4 391.3 L1046.5 390.2 L1044.6 387.6 L1042.4 386.5 L1041.7 384.6 L1039.8 381.7 L1037.2 378.7 L1034.2 375.7 L1032.0 372.7 L1029.8 370.5 L1027.5 368.6 L1027.7 364.6 L1031.2 365.3 L1033.5 366.4 L1033.9 368.6 L1036.5 371.2 L1038.7 373.9 L1042.4 376.5 L1044.6 379.1 L1047.6 380.6 L1046.5 382.4 L1050.6 384.6 L1055.1 388.0 L1058.8 391.3 L1061.0 393.6 L1061.4 396.5 L1060.3 398.8 L1062.5 401.8 L1067.0 404.4 L1071.4 405.8 L1076.6 407.7 L1081.1 410.0"/>

</g>
<g id="axes">
<rect x="149.5" y="190.5" width="1284" height="540.0" fill="none" stroke="#000" stroke-width="1" shape-rendering="crispEdges"/>
<path d="M145.0 724.5H149.5M145.0 718.5H149.5M145.0 712.5H149.5M145.0 706.5H149.5M140.0 700.5H149.5M145.0 694.5H149.5M145.0 688.5H149.5M145.0 682.5H149.5M145.0 676.5H149.5M145.0 670.5H149.5M145.0 664.5H149.5M145.0 658.5H149.5M145.0 652.5H149.5M145.0 646.5H149.5M140.0 640.5H149.5M145.0 634.5H149.5M145.0 628.5H149.5M145.0 622.5H149.5M145.0 616.5H149.5M145.0 610.5H149.5M145.0 604.5H149.5M145.0 598.5H149.5M145.0 592.5H149.5M145.0 586.5H149.5M140.0 580.5H149.5M145.0 574.5H149.5M145.0 568.5H149.5M145.0 562.5H149.5M145.0 556.5H149.5M145.0 550.5H149.5M145.0 544.5H149.5M145.0 538.5H149.5M145.0 532.5H149.5M145.0 526.5H149.5M140.0 520.5H149.5M145.0 514.5H149.5M145.0 508.5H149.5M145.0 502.5H149.5M145.0 496.5H149.5M145.0 490.5H149.5M145.0 484.5H149.5M145.0 478.5H149.5M145.0 472.5H149.5M145.0 466.5H149.5M140.0 460.5H149.5M145.0 454.5H149.5M145.0 448.5H149.5M145.0 442.5H149.5M145.0 436.5H149.5M145.0 430.5H149.5M145.0 424.5H149.5M145.0 418.5H149.5M145.0 412.5H149.5M145.0 406.5H149.5M140.0 400.5H149.5M145.0 394.5H149.5M145.0 388.5H149.5M145.0 382.5H149.5M145.0 376.5H149.5M145.0 370.5H149.5M145.0 364.5H149.5M145.0 358.5H149.5M145.0 352.5H149.5M145.0 346.5H149.5M140.0 340.5H149.5M145.0 334.5H149.5M145.0 328.5H149.5M145.0 322.5H149.5M145.0 316.5H149.5M145.0 310.5H149.5M145.0 304.5H149.5M145.0 298.5H149.5M145.0 292.5H149.5M145.0 286.5H149.5M140.0 280.5H149.5M145.0 274.5H149.5M145.0 268.5H149.5M145.0 262.5H149.5M145.0 256.5H149.5M145.0 250.5H149.5M145.0 244.5H149.5M145.0 238.5H149.5M145.0 232.5H149.5M145.0 226.5H149.5M140.0 220.5H149.5M145.0 214.5H149.5M145.0 208.5H149.5M145.0 202.5H149.5M145.0 196.5H149.5M167.4 730.5V735.0M185.3 730.5V735.0M203.2 730.5V735.0M221.1 730.5V735.0M239.0 730.5V735.0M256.9 730.5V735.0M274.8 730.5V735.0M292.7 730.5V735.0M310.6 730.5V735.0M328.5 730.5V740.0M346.4 730.5V735.0M364.3 730.5V735.0M382.2 730.5V735.0M400.1 730.5V735.0M418.0 730.5V735.0M435.9 730.5V735.0M453.8 730.5V735.0M471.7 730.5V735.0M489.6 730.5V735.0M507.5 730.5V740.0M525.4 730.5V735.0M543.3 730.5V735.0M561.2 730.5V735.0M579.1 730.5V735.0M597.0 730.5V735.0M614.9 730.5V735.0M632.8 730.5V735.0M650.7 730.5V735.0M668.6 730.5V735.0M686.5 730.5V740.0M704.4 730.5V735.0M722.3 730.5V735.0M740.2 730.5V735.0M758.2 730.5V735.0M776.1 730.5V735.0M794.0 730.5V735.0M811.9 730.5V735.0M829.8 730.5V735.0M847.7 730.5V735.0M865.6 730.5V740.0M883.5 730.5V735.0M901.4 730.5V735.0M919.3 730.5V735.0M937.2 730.5V735.0M955.1 730.5V735.0M973.0 730.5V735.0M990.9 730.5V735.0M1008.8 730.5V735.0M1026.7 730.5V735.0M1044.6 730.5V740.0M1062.5 730.5V735.0M1080.4 730.5V735.0M1098.3 730.5V735.0M1116.2 730.5V735.0M1134.1 730.5V735.0M1152.0 730.5V735.0M1169.9 730.5V735.0M1187.8 730.5V735.0M1205.7 730.5V735.0M1223.6 730.5V740.0M1241.5 730.5V735.0M1259.4 730.5V735.0M1277.3 730.5V735.0M1295.2 730.5V735.0M1313.1 730.5V735.0M1331.0 730.5V735.0M1348.9 730.5V735.0M1366.8 730.5V735.0M1384.7 730.5V735.0M1402.6 730.5V740.0M1420.5 730.5V735.0" stroke="#000" stroke-width="1" fill="none" shape-rendering="crispEdges"/>
<text class="axn" x="138.5" y="702.9" text-anchor="end"><tspan class="mn">-</tspan>80</text>
<text class="axn" x="138.5" y="642.9" text-anchor="end"><tspan class="mn">-</tspan>60</text>
<text class="axn" x="138.5" y="582.9" text-anchor="end"><tspan class="mn">-</tspan>40</text>
<text class="axn" x="138.5" y="522.9" text-anchor="end"><tspan class="mn">-</tspan>20</text>
<text class="axn" x="138.5" y="462.9" text-anchor="end">0</text>
<text class="axn" x="138.5" y="402.9" text-anchor="end">20</text>
<text class="axn" x="138.5" y="342.9" text-anchor="end">40</text>
<text class="axn" x="138.5" y="282.9" text-anchor="end">60</text>
<text class="axn" x="138.5" y="222.9" text-anchor="end">80</text>
<text class="axn" x="330.0" y="755" text-anchor="middle">50</text>
<text class="axn" x="509.0" y="755" text-anchor="middle">100</text>
<text class="axn" x="688.0" y="755" text-anchor="middle">150</text>
<text class="axn" x="867.1" y="755" text-anchor="middle">200</text>
<text class="axn" x="1046.1" y="755" text-anchor="middle">250</text>
<text class="axn" x="1225.1" y="755" text-anchor="middle">300</text>
<text class="axn" x="1404.1" y="755" text-anchor="middle">350</text>
<text class="ax" x="793" y="770.6" text-anchor="middle">lon (degrees_east)</text>
<text class="ax" transform="translate(95 460) rotate(-90)" text-anchor="middle">lat (degrees_north)</text>
</g>
<g id="colorbar">
<defs><linearGradient id="cbg" x1="0" x2="1" y1="0" y2="0"><stop offset="0" stop-color="#0000ff"/><stop offset="0.25" stop-color="#00ffff"/><stop offset="0.5" stop-color="#00ff00"/><stop offset="0.75" stop-color="#ffff00"/><stop offset="1" stop-color="#ff0000"/></linearGradient></defs>
<rect x="180" y="830" width="1179" height="48" fill="url(#cbg)"/>
<text class="cb" x="183.1" y="907.8" text-anchor="middle">7.009e-09</text>
<text class="cb" x="477.7" y="907.8" text-anchor="middle">6.931e-07</text>
<text class="cb" x="772.2" y="907.8" text-anchor="middle">1.379e-06</text>
<text class="cb" x="1066.8" y="907.8" text-anchor="middle">2.065e-06</text>
<text class="cb" x="1361.3" y="907.8" text-anchor="middle">2.751e-06</text>
<path d="M180.3 878V889M474.9 878V889M769.4 878V889M1064.0 878V889M1358.5 878V889" stroke="#000" stroke-width="1" fill="none" shape-rendering="crispEdges"/>
</g>
</svg>
</div>
</body>
</html>
